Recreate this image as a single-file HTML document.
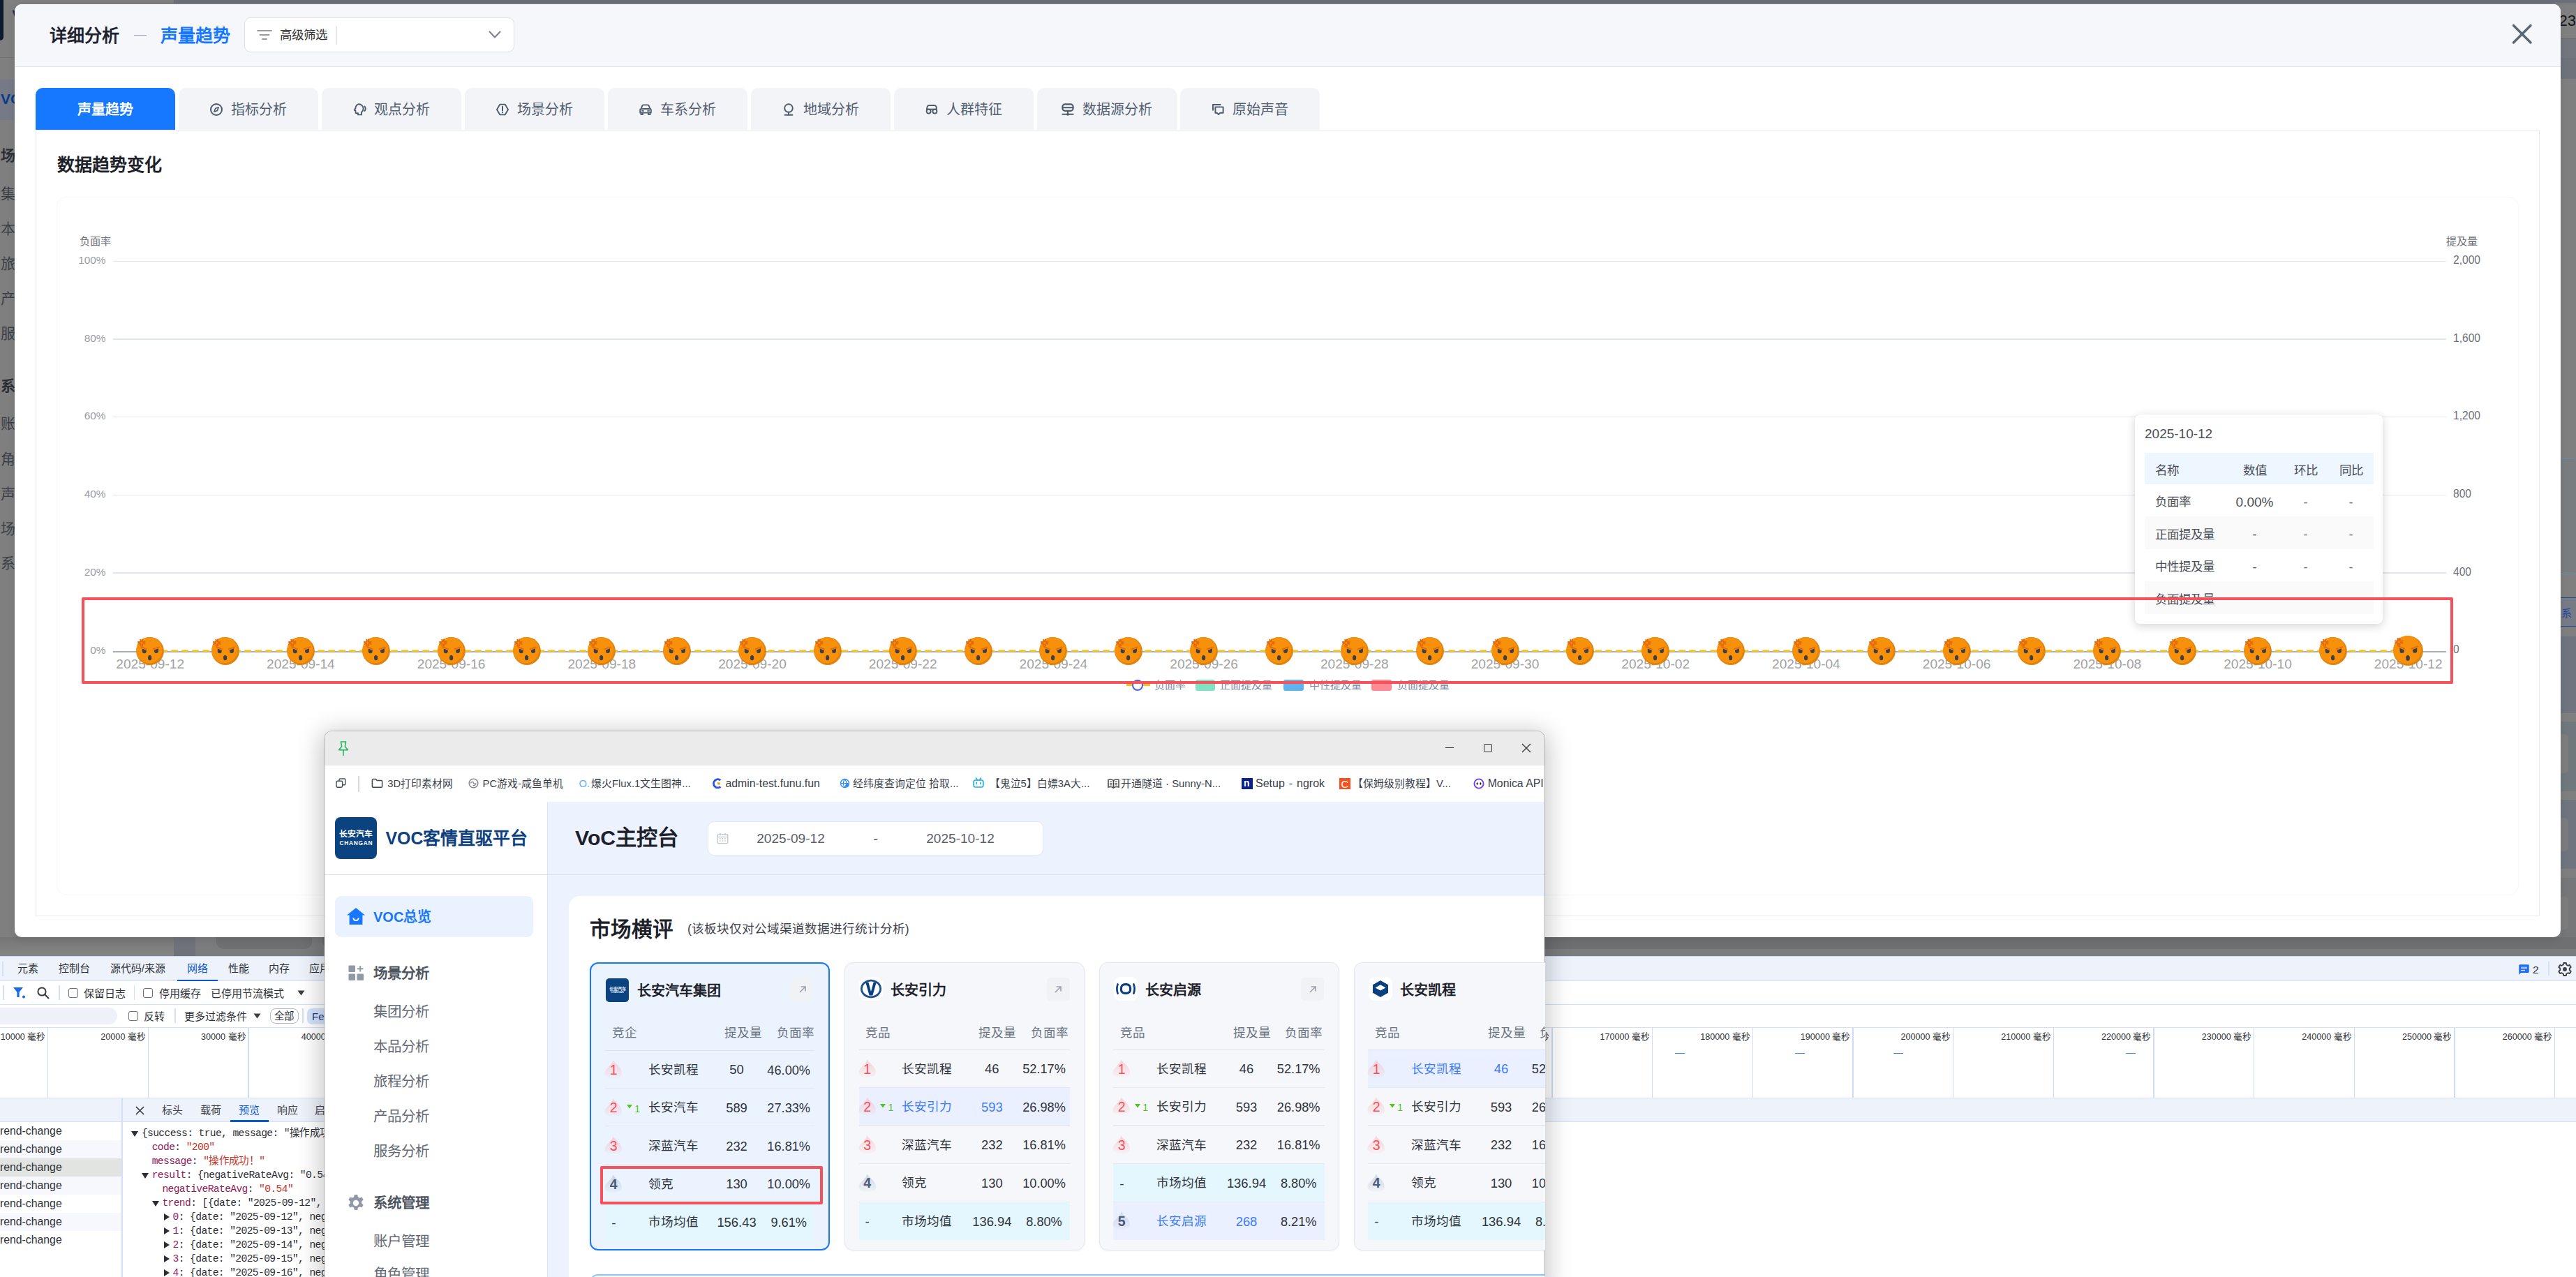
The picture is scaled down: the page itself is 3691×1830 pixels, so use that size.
<!DOCTYPE html>
<html lang="zh-CN"><head><meta charset="utf-8"><title>VOC</title><style>
*{box-sizing:border-box;margin:0;padding:0}
html,body{width:3691px;height:1830px;overflow:hidden}
body{position:relative;background:#7f7f7f;font-family:"Liberation Sans",sans-serif;color:#1d2129}
.a{position:absolute}
.t{position:absolute;white-space:nowrap;line-height:1}
.b{font-weight:bold}
.c{transform:translateX(-50%)}
.r{transform:translateX(-100%)}
.m{font-family:"Liberation Mono",monospace}
</style></head><body>
<!-- dimmed page behind modal -->
<div class="a" style="left:0.0px;top:0.0px;width:3691.0px;height:4.0px;background:#6c6f78;"></div>
<div class="a" style="left:0.0px;top:4.0px;width:3691.0px;height:2.0px;background:#787b83;"></div>
<div class="a" style="left:0.0px;top:0.0px;width:249.0px;height:6.0px;background:#808080;"></div>
<div class="a" style="left:0.0px;top:0.0px;width:5.0px;height:58.0px;background:#0d1a30;border-radius:0 0 5px 0;"></div>
<div class="a" style="left:0.0px;top:114.0px;width:21.0px;height:58.0px;background:#767a86;"></div>
<div class="a" style="left:0.0px;top:82.0px;width:21.0px;height:1.0px;background:#747474;"></div>
<div class="t b" style="left:1.0px;top:130.5px;font-size:21px;color:#0c3a8c;">VO</div>
<div class="t b" style="left:1.0px;top:211.5px;font-size:21px;color:#2b2e35;">场</div>
<div class="t " style="left:1.0px;top:266.5px;font-size:21px;color:#3c3f46;">集</div>
<div class="t " style="left:1.0px;top:316.5px;font-size:21px;color:#3c3f46;">本</div>
<div class="t " style="left:1.0px;top:366.5px;font-size:21px;color:#3c3f46;">旅</div>
<div class="t " style="left:1.0px;top:416.5px;font-size:21px;color:#3c3f46;">产</div>
<div class="t " style="left:1.0px;top:466.5px;font-size:21px;color:#3c3f46;">服</div>
<div class="t b" style="left:1.0px;top:541.5px;font-size:21px;color:#2b2e35;">系</div>
<div class="t " style="left:1.0px;top:595.5px;font-size:21px;color:#3c3f46;">账</div>
<div class="t " style="left:1.0px;top:646.5px;font-size:21px;color:#3c3f46;">角</div>
<div class="t " style="left:1.0px;top:696.5px;font-size:21px;color:#3c3f46;">声</div>
<div class="t " style="left:1.0px;top:746.5px;font-size:21px;color:#3c3f46;">场</div>
<div class="t " style="left:1.0px;top:795.5px;font-size:21px;color:#3c3f46;">系</div>
<div class="t b" style="left:17.5px;top:12.0px;font-size:24px;color:#10244a;">V</div>
<div class="a" style="left:3669.0px;top:6.0px;width:22.0px;height:50.0px;background:#808080;"></div>
<div class="a" style="left:3669.0px;top:56.0px;width:22.0px;height:27.0px;background:#73767f;"></div>
<div class="a" style="left:3669.0px;top:83.0px;width:22.0px;height:30.0px;background:#6e727b;"></div>
<div class="a" style="left:3669.0px;top:55.0px;width:22.0px;height:1.0px;background:#6a6a6a;"></div>
<div class="t " style="left:3666.5px;top:19.0px;font-size:22px;color:#15171c;">232</div>
<div class="a" style="left:0;top:1343px;width:249px;height:27px;background:linear-gradient(#767676,#858585)"></div>
<div class="a" style="left:249.0px;top:1343.0px;width:31.0px;height:27.0px;background:#6f727b;"></div>
<div class="a" style="left:280.0px;top:1343.0px;width:3411.0px;height:27.0px;background:#7b7c7e;"></div>
<div class="a" style="left:310.0px;top:1343.0px;width:137.0px;height:17.0px;background:#6f7072;border-radius:0 0 10px 10px;"></div>
<div class="a" style="left:462.0px;top:1343.0px;width:3229.0px;height:17.0px;background:#6f7072;border-radius:0 0 0 10px;"></div>
<div class="a" style="left:3669.0px;top:657.0px;width:22.0px;height:166.0px;background:#7a7d80;border-top:1.5px solid #6a8aa8;border-bottom:1.5px solid #6f95a8;border-radius:0 4px 4px 0;"></div>
<div class="a" style="left:3669.0px;top:856.0px;width:22.0px;height:42.0px;background:#777b86;border-top:1.5px solid #1f4a9e;border-bottom:1.5px solid #1f4a9e;"></div>
<div class="t " style="left:3670.0px;top:870.5px;font-size:15px;color:#1f4a9e;">系</div>
<div class="a" style="left:3669.0px;top:912.0px;width:22.0px;height:110.0px;background:#70747f;"></div>
<div class="a" style="left:3669.0px;top:1034.0px;width:22.0px;height:100.0px;background:#6f797d;"></div>
<div class="a" style="left:3669.0px;top:1052.0px;width:11.0px;height:56.0px;background:#7e7e7e;border-radius:0 5px 5px 0;"></div>
<div class="a" style="left:3669.0px;top:1146.0px;width:22.0px;height:99.0px;background:#70747f;"></div>
<div class="a" style="left:3669.0px;top:1172.0px;width:11.0px;height:48.0px;background:#7c7c7e;border-radius:0 5px 5px 0;"></div>
<div class="a" style="left:3669.0px;top:1258.0px;width:22.0px;height:85.0px;background:#767778;"></div>
<div class="a" style="left:3669.0px;top:1285.0px;width:11.0px;height:47.0px;background:#7d7d7d;border-radius:0 5px 5px 0;"></div>
<!-- modal -->
<div class="a" style="left:21px;top:6px;width:3648px;height:1337px;background:#fff;border-radius:10px;overflow:hidden;box-shadow:0 3px 12px rgba(0,0,0,.10)">
<div class="a" style="left:0;top:0;width:3648px;height:90px;background:#f5f7fb;border-bottom:1.5px solid #e1e5ed"></div>
</div>
<div class="t b" style="left:71.0px;top:39.3px;font-size:25px;color:#1e2330;">详细分析</div>
<div class="a" style="left:191.5px;top:49.7px;width:18.5px;height:1.5px;background:#9aa2b1;"></div>
<div class="t b" style="left:230.0px;top:39.3px;font-size:25px;color:#1677ff;">声量趋势</div>
<div class="a" style="left:350px;top:25px;width:387px;height:50px;background:#fff;border:1.5px solid #dcdfe6;border-radius:9px"></div>
<svg class="a" style="left:367px;top:40px" width="24" height="20" viewBox="0 0 24 20"><g stroke="#9a9a9a" stroke-width="1.8" stroke-linecap="round"><line x1="2" y1="4" x2="22" y2="4"/><line x1="5.5" y1="10" x2="18.5" y2="10"/><line x1="9" y1="16" x2="15" y2="16"/></g></svg>
<div class="t " style="left:401.0px;top:41.8px;font-size:17.5px;color:#303133;">高级筛选</div>
<div class="a" style="left:481.0px;top:36.5px;width:1.5px;height:27.0px;background:#e4e7ed;"></div>
<svg class="a" style="left:699px;top:43px" width="20" height="14" viewBox="0 0 20 14"><path d="M2.5 2.5 L10 10.5 L17.5 2.5" fill="none" stroke="#7b8190" stroke-width="2" stroke-linecap="round" stroke-linejoin="round"/></svg>
<svg class="a" style="left:3599px;top:34px" width="30" height="30" viewBox="0 0 30 30"><path d="M2.5 2.5 L27 27 M27 2.5 L2.5 27" stroke="#5b6573" stroke-width="3.4" stroke-linecap="round"/></svg>
<div class="a" style="left:51.0px;top:126.0px;width:200.0px;height:60.0px;background:#1677ff;border-radius:10px 10px 0 0;"></div>
<div class="t b c" style="left:151.0px;top:146.5px;font-size:20px;color:#fff;">声量趋势</div>
<div class="a" style="left:256.0px;top:126.0px;width:200.0px;height:60.0px;background:#f2f4f8;border-radius:10px 10px 0 0;"></div>
<svg class="a" style="left:300.2px;top:146.5px" width="20" height="20" viewBox="0 0 20 20"><circle cx="10" cy="10" r="8" fill="none" stroke="#4e5969" stroke-width="2"/><path d="M13.2 6.8 L11.4 11.4 L6.8 13.2 L8.6 8.6 Z" fill="none" stroke="#4e5969" stroke-width="1.6" stroke-linejoin="round"/></svg>
<div class="t " style="left:330.5px;top:146.5px;font-size:20px;color:#535e70;">指标分析</div>
<div class="a" style="left:461.0px;top:126.0px;width:200.0px;height:60.0px;background:#f2f4f8;border-radius:10px 10px 0 0;"></div>
<svg class="a" style="left:505.2px;top:146.5px" width="20" height="20" viewBox="0 0 20 20"><path d="M9 2.2 a6.6 6.6 0 0 1 6.6 6.6 c0 2.4 -1.2 4 -2.6 5.2 v3.4 h-5 v-2.2 h-2 c-1 0 -1.6 -0.6 -1.6 -1.6 v-2 l-1.6 -1 l1.6 -2.6 a6.6 6.6 0 0 1 4.6 -5.8 Z" fill="none" stroke="#4e5969" stroke-width="1.9" stroke-linejoin="round"/><path d="M17.6 5.6 a5.5 5.5 0 0 1 0 6.4" fill="none" stroke="#4e5969" stroke-width="1.9" stroke-linecap="round"/></svg>
<div class="t " style="left:535.5px;top:146.5px;font-size:20px;color:#535e70;">观点分析</div>
<div class="a" style="left:666.0px;top:126.0px;width:200.0px;height:60.0px;background:#f2f4f8;border-radius:10px 10px 0 0;"></div>
<svg class="a" style="left:710.2px;top:146.5px" width="20" height="20" viewBox="0 0 20 20"><path d="M6.2 2.6 h7.6 l4.2 7.4 l-4.2 7.4 h-7.6 l-4.2 -7.4 Z" fill="none" stroke="#4e5969" stroke-width="1.9" stroke-linejoin="round"/><path d="M10 5.8 v5.4" stroke="#4e5969" stroke-width="2" stroke-linecap="round"/><circle cx="10" cy="14" r="1.15" fill="#4e5969"/></svg>
<div class="t " style="left:740.5px;top:146.5px;font-size:20px;color:#535e70;">场景分析</div>
<div class="a" style="left:871.0px;top:126.0px;width:200.0px;height:60.0px;background:#f2f4f8;border-radius:10px 10px 0 0;"></div>
<svg class="a" style="left:915.2px;top:146.5px" width="20" height="20" viewBox="0 0 20 20"><path d="M3.600 9 L5.200 4.600 c.3 -.8 .9 -1.200 1.700 -1.200 h6.200 c.8 0 1.400 .4 1.700 1.200 l1.600 4.400" fill="none" stroke="#4e5969" stroke-width="1.900" stroke-linejoin="round"/><path d="M2.200 10.600 a1.600 1.600 0 0 1 1.600 -1.600 h12.400 a1.600 1.600 0 0 1 1.600 1.600 v4 h-15.600 Z" fill="none" stroke="#4e5969" stroke-width="1.900" stroke-linejoin="round"/><path d="M3.400 14.600 v2.600 h2.600 v-2.600 M14 14.600 v2.600 h2.600 v-2.600" fill="none" stroke="#4e5969" stroke-width="1.700" stroke-linejoin="round"/><path d="M5 11.900 h2 M13 11.900 h2" stroke="#4e5969" stroke-width="1.700" stroke-linecap="round"/></svg>
<div class="t " style="left:945.5px;top:146.5px;font-size:20px;color:#535e70;">车系分析</div>
<div class="a" style="left:1076.0px;top:126.0px;width:200.0px;height:60.0px;background:#f2f4f8;border-radius:10px 10px 0 0;"></div>
<svg class="a" style="left:1120.2px;top:146.5px" width="20" height="20" viewBox="0 0 20 20"><circle cx="10" cy="8" r="5.8" fill="none" stroke="#4e5969" stroke-width="1.9"/><path d="M10 13.8 v3.6 M4.6 17.8 h10.8" stroke="#4e5969" stroke-width="1.9" stroke-linecap="round"/></svg>
<div class="t " style="left:1150.5px;top:146.5px;font-size:20px;color:#535e70;">地域分析</div>
<div class="a" style="left:1281.0px;top:126.0px;width:200.0px;height:60.0px;background:#f2f4f8;border-radius:10px 10px 0 0;"></div>
<svg class="a" style="left:1325.2px;top:146.5px" width="20" height="20" viewBox="0 0 20 20"><path d="M3 10 c0 -4 1.4 -6 3.2 -6 h7.6 c1.8 0 3.2 2 3.2 6" fill="none" stroke="#4e5969" stroke-width="1.9"/><circle cx="5.6" cy="12.6" r="3" fill="none" stroke="#4e5969" stroke-width="1.9"/><circle cx="14.4" cy="12.6" r="3" fill="none" stroke="#4e5969" stroke-width="1.9"/><path d="M2 9.6 h16" stroke="#4e5969" stroke-width="1.9"/></svg>
<div class="t " style="left:1355.5px;top:146.5px;font-size:20px;color:#535e70;">人群特征</div>
<div class="a" style="left:1486.0px;top:126.0px;width:200.0px;height:60.0px;background:#f2f4f8;border-radius:10px 10px 0 0;"></div>
<svg class="a" style="left:1520.2px;top:146.5px" width="20" height="20" viewBox="0 0 20 20"><rect x="2.4" y="2.4" width="15.2" height="9.4" rx="3.6" fill="none" stroke="#4e5969" stroke-width="2.2"/><path d="M2.4 7.2 h15.2" stroke="#4e5969" stroke-width="2"/><path d="M10 11.8 v4 M2.4 16.8 h15.2" stroke="#4e5969" stroke-width="2" stroke-linecap="round"/><circle cx="10" cy="16.8" r="1.9" fill="#4e5969"/></svg>
<div class="t " style="left:1550.5px;top:146.5px;font-size:20px;color:#535e70;">数据源分析</div>
<div class="a" style="left:1691.0px;top:126.0px;width:200.0px;height:60.0px;background:#f2f4f8;border-radius:10px 10px 0 0;"></div>
<svg class="a" style="left:1735.2px;top:146.5px" width="20" height="20" viewBox="0 0 20 20"><path d="M6.4 6.4 h11.2 v8.4 h-4.4 l-2.2 2.2 l-2.2 -2.2 h-2.4 Z" fill="none" stroke="#4e5969" stroke-width="1.9" stroke-linejoin="round"/><path d="M3 11.6 v-8.6 h11.4" fill="none" stroke="#4e5969" stroke-width="1.9" stroke-linejoin="round"/></svg>
<div class="t " style="left:1765.5px;top:146.5px;font-size:20px;color:#535e70;">原始声音</div>
<div class="a" style="left:51px;top:186px;width:3588px;height:1127px;border:1.5px solid #e8ebf2;"></div>
<div class="t b" style="left:82.0px;top:223.5px;font-size:25px;color:#1d2129;">数据趋势变化</div>
<div class="a" style="left:81px;top:282px;width:3528px;height:1001px;border:1.5px solid #f6f7fa;border-radius:14px"></div>
<div class="t " style="left:114.0px;top:338.4px;font-size:15.2px;color:#6e7079;">负面率</div>
<div class="t " style="left:3504.5px;top:338.4px;font-size:15.2px;color:#6e7079;">提及量</div>
<div class="a" style="left:162.0px;top:373.5px;width:3343.0px;height:1.8px;background:#e0e6f1;"></div>
<div class="t r" style="left:151.5px;top:365.2px;font-size:15.4px;color:#999ca3;">100%</div>
<div class="t " style="left:3515.0px;top:365.1px;font-size:15.6px;color:#6e7079;">2,000</div>
<div class="a" style="left:162.0px;top:485.0px;width:3343.0px;height:1.8px;background:#e0e6f1;"></div>
<div class="t r" style="left:151.5px;top:476.7px;font-size:15.4px;color:#999ca3;">80%</div>
<div class="t " style="left:3515.0px;top:476.6px;font-size:15.6px;color:#6e7079;">1,600</div>
<div class="a" style="left:162.0px;top:596.7px;width:3343.0px;height:1.8px;background:#e0e6f1;"></div>
<div class="t r" style="left:151.5px;top:588.4px;font-size:15.4px;color:#999ca3;">60%</div>
<div class="t " style="left:3515.0px;top:588.3px;font-size:15.6px;color:#6e7079;">1,200</div>
<div class="a" style="left:162.0px;top:708.5px;width:3343.0px;height:1.8px;background:#e0e6f1;"></div>
<div class="t r" style="left:151.5px;top:700.2px;font-size:15.4px;color:#999ca3;">40%</div>
<div class="t " style="left:3515.0px;top:700.1px;font-size:15.6px;color:#6e7079;">800</div>
<div class="a" style="left:162.0px;top:820.1px;width:3343.0px;height:1.8px;background:#e0e6f1;"></div>
<div class="t r" style="left:151.5px;top:811.8px;font-size:15.4px;color:#999ca3;">20%</div>
<div class="t " style="left:3515.0px;top:811.7px;font-size:15.6px;color:#6e7079;">400</div>
<div class="t r" style="left:151.5px;top:923.5px;font-size:15.4px;color:#999ca3;">0%</div>
<div class="t " style="left:3515.0px;top:923.4px;font-size:15.6px;color:#6e7079;">0</div>
<div class="a" style="left:162.0px;top:933.0px;width:3343.0px;height:1.6px;background:#a9aebb;"></div>
<div class="t c" style="left:215.2px;top:941.5px;font-size:19.1px;color:#a2a2a2;">2025-09-12</div>
<div class="t c" style="left:430.9px;top:941.5px;font-size:19.1px;color:#a2a2a2;">2025-09-14</div>
<div class="t c" style="left:646.6px;top:941.5px;font-size:19.1px;color:#a2a2a2;">2025-09-16</div>
<div class="t c" style="left:862.3px;top:941.5px;font-size:19.1px;color:#a2a2a2;">2025-09-18</div>
<div class="t c" style="left:1078.0px;top:941.5px;font-size:19.1px;color:#a2a2a2;">2025-09-20</div>
<div class="t c" style="left:1293.7px;top:941.5px;font-size:19.1px;color:#a2a2a2;">2025-09-22</div>
<div class="t c" style="left:1509.4px;top:941.5px;font-size:19.1px;color:#a2a2a2;">2025-09-24</div>
<div class="t c" style="left:1725.1px;top:941.5px;font-size:19.1px;color:#a2a2a2;">2025-09-26</div>
<div class="t c" style="left:1940.8px;top:941.5px;font-size:19.1px;color:#a2a2a2;">2025-09-28</div>
<div class="t c" style="left:2156.5px;top:941.5px;font-size:19.1px;color:#a2a2a2;">2025-09-30</div>
<div class="t c" style="left:2372.2px;top:941.5px;font-size:19.1px;color:#a2a2a2;">2025-10-02</div>
<div class="t c" style="left:2587.9px;top:941.5px;font-size:19.1px;color:#a2a2a2;">2025-10-04</div>
<div class="t c" style="left:2803.6px;top:941.5px;font-size:19.1px;color:#a2a2a2;">2025-10-06</div>
<div class="t c" style="left:3019.3px;top:941.5px;font-size:19.1px;color:#a2a2a2;">2025-10-08</div>
<div class="t c" style="left:3235.0px;top:941.5px;font-size:19.1px;color:#a2a2a2;">2025-10-10</div>
<div class="t c" style="left:3450.7px;top:941.5px;font-size:19.1px;color:#a2a2a2;">2025-10-12</div>
<svg class="a" style="left:0;top:926px" width="3691" height="14"><line x1="215.2" y1="6.8" x2="3450.7" y2="6.8" stroke="#fcc10a" stroke-width="2.4" stroke-dasharray="9.8 5.2"/></svg>
<svg width="0" height="0" style="position:absolute"><defs><g id="ang">
<circle cx="20" cy="20" r="19.9" fill="#e0820e"/>
<circle cx="18.800" cy="18.700" r="18.600" fill="#f7900a"/>
<path d="M6.300 3.700 L6.800 6.300 M8.900 3.500 L8.800 6.100 M6.700 10.300 L6.400 12.700 M8.800 10.500 L9 12.900 M2.900 7 L5.500 7.300 M3.100 9.600 L5.500 9.400 M10 7.300 L12.600 7 M10 9.400 L12.500 9.600" stroke="#e4680b" stroke-width="1.900" stroke-linecap="round" fill="none"/>
<path d="M7.200 14.100 L14.800 17.200" stroke="#e66d0b" stroke-width="1.900" stroke-linecap="round"/>
<path d="M32.800 14.300 L24.600 17.200" stroke="#e66d0b" stroke-width="1.900" stroke-linecap="round"/>
<path d="M8.800 16.500 L14.700 18.900 V20.300 a2.950 2.950 0 0 1 -5.900 0 Z" fill="#3e3f45"/>
<path d="M31.900 16.300 L26 18.700 V20.100 a2.950 2.950 0 0 0 5.900 0 Z" fill="#3e3f45"/>
<ellipse cx="19.600" cy="29.700" rx="2.600" ry="3.600" fill="#3e3f45"/>
</g></defs></svg>
<svg class="a" style="left:195.2px;top:912.9px" width="40" height="40" viewBox="0 0 40 40"><use href="#ang"/></svg>
<svg class="a" style="left:303.0px;top:912.9px" width="40" height="40" viewBox="0 0 40 40"><use href="#ang"/></svg>
<svg class="a" style="left:410.9px;top:912.9px" width="40" height="40" viewBox="0 0 40 40"><use href="#ang"/></svg>
<svg class="a" style="left:518.8px;top:912.9px" width="40" height="40" viewBox="0 0 40 40"><use href="#ang"/></svg>
<svg class="a" style="left:626.6px;top:912.9px" width="40" height="40" viewBox="0 0 40 40"><use href="#ang"/></svg>
<svg class="a" style="left:734.5px;top:912.9px" width="40" height="40" viewBox="0 0 40 40"><use href="#ang"/></svg>
<svg class="a" style="left:842.3px;top:912.9px" width="40" height="40" viewBox="0 0 40 40"><use href="#ang"/></svg>
<svg class="a" style="left:950.1px;top:912.9px" width="40" height="40" viewBox="0 0 40 40"><use href="#ang"/></svg>
<svg class="a" style="left:1058.0px;top:912.9px" width="40" height="40" viewBox="0 0 40 40"><use href="#ang"/></svg>
<svg class="a" style="left:1165.8px;top:912.9px" width="40" height="40" viewBox="0 0 40 40"><use href="#ang"/></svg>
<svg class="a" style="left:1273.7px;top:912.9px" width="40" height="40" viewBox="0 0 40 40"><use href="#ang"/></svg>
<svg class="a" style="left:1381.5px;top:912.9px" width="40" height="40" viewBox="0 0 40 40"><use href="#ang"/></svg>
<svg class="a" style="left:1489.4px;top:912.9px" width="40" height="40" viewBox="0 0 40 40"><use href="#ang"/></svg>
<svg class="a" style="left:1597.2px;top:912.9px" width="40" height="40" viewBox="0 0 40 40"><use href="#ang"/></svg>
<svg class="a" style="left:1705.1px;top:912.9px" width="40" height="40" viewBox="0 0 40 40"><use href="#ang"/></svg>
<svg class="a" style="left:1813.0px;top:912.9px" width="40" height="40" viewBox="0 0 40 40"><use href="#ang"/></svg>
<svg class="a" style="left:1920.8px;top:912.9px" width="40" height="40" viewBox="0 0 40 40"><use href="#ang"/></svg>
<svg class="a" style="left:2028.6px;top:912.9px" width="40" height="40" viewBox="0 0 40 40"><use href="#ang"/></svg>
<svg class="a" style="left:2136.5px;top:912.9px" width="40" height="40" viewBox="0 0 40 40"><use href="#ang"/></svg>
<svg class="a" style="left:2244.3px;top:912.9px" width="40" height="40" viewBox="0 0 40 40"><use href="#ang"/></svg>
<svg class="a" style="left:2352.2px;top:912.9px" width="40" height="40" viewBox="0 0 40 40"><use href="#ang"/></svg>
<svg class="a" style="left:2460.0px;top:912.9px" width="40" height="40" viewBox="0 0 40 40"><use href="#ang"/></svg>
<svg class="a" style="left:2567.9px;top:912.9px" width="40" height="40" viewBox="0 0 40 40"><use href="#ang"/></svg>
<svg class="a" style="left:2675.7px;top:912.9px" width="40" height="40" viewBox="0 0 40 40"><use href="#ang"/></svg>
<svg class="a" style="left:2783.6px;top:912.9px" width="40" height="40" viewBox="0 0 40 40"><use href="#ang"/></svg>
<svg class="a" style="left:2891.4px;top:912.9px" width="40" height="40" viewBox="0 0 40 40"><use href="#ang"/></svg>
<svg class="a" style="left:2999.3px;top:912.9px" width="40" height="40" viewBox="0 0 40 40"><use href="#ang"/></svg>
<svg class="a" style="left:3107.1px;top:912.9px" width="40" height="40" viewBox="0 0 40 40"><use href="#ang"/></svg>
<svg class="a" style="left:3215.0px;top:912.9px" width="40" height="40" viewBox="0 0 40 40"><use href="#ang"/></svg>
<svg class="a" style="left:3322.8px;top:912.9px" width="40" height="40" viewBox="0 0 40 40"><use href="#ang"/></svg>
<svg class="a" style="left:3429.2px;top:911.4px" width="43" height="43" viewBox="0 0 40 40"><use href="#ang"/></svg>
<div class="a" style="left:1614.0px;top:980.3px;width:34.0px;height:2.6px;background:#f7bb1c;"></div>
<div class="a" style="left:1622.4px;top:973.6px;width:16px;height:16px;border-radius:50%;border:2.6px solid #4a63d9;background:#fff"></div>
<div class="t " style="left:1653.5px;top:974.1px;font-size:15px;color:#7c89a3;">负面率</div>
<div class="a" style="left:1712.7px;top:974.0px;width:28.5px;height:15.5px;background:#7fe3c4;border-radius:3px;"></div>
<div class="t " style="left:1748.4px;top:974.1px;font-size:15px;color:#7c89a3;">正面提及量</div>
<div class="a" style="left:1839.0px;top:974.0px;width:28.5px;height:15.5px;background:#5fb4ef;border-radius:3px;"></div>
<div class="t " style="left:1876.4px;top:974.1px;font-size:15px;color:#7c89a3;">中性提及量</div>
<div class="a" style="left:1965.0px;top:974.0px;width:28.5px;height:15.5px;background:#fe8a93;border-radius:3px;"></div>
<div class="t " style="left:2002.0px;top:974.1px;font-size:15px;color:#7c89a3;">负面提及量</div>
<div class="a" style="left:3059px;top:594px;width:355px;height:300px;background:#fff;border-radius:8px;box-shadow:0 3px 14px rgba(0,0,0,.18);overflow:hidden">
<div class="a" style="left:14.0px;top:54.5px;width:328.0px;height:45.5px;background:#eef6ff;"></div>
<div class="a" style="left:14.0px;top:146.0px;width:328.0px;height:46.5px;background:#fafafa;"></div>
<div class="a" style="left:14.0px;top:239.0px;width:328.0px;height:46.5px;background:#fafafa;"></div>
</div>
<div class="t " style="left:3073.0px;top:612.0px;font-size:19px;color:#4b4f57;">2025-10-12</div>
<div class="t " style="left:3087.5px;top:665.5px;font-size:17.5px;color:#4b4f57;">名称</div>
<div class="t c" style="left:3230.5px;top:665.5px;font-size:17.5px;color:#4b4f57;">数值</div>
<div class="t c" style="left:3303.5px;top:665.5px;font-size:17.5px;color:#4b4f57;">环比</div>
<div class="t c" style="left:3368.5px;top:665.5px;font-size:17.5px;color:#4b4f57;">同比</div>
<div class="t " style="left:3087.5px;top:711.1px;font-size:17.5px;color:#4b4f57;">负面率</div>
<div class="t c" style="left:3230.5px;top:710.4px;font-size:19px;color:#4b4f57;">0.00%</div>
<div class="t c" style="left:3303.5px;top:710.9px;font-size:18px;color:#6b6f78;">-</div>
<div class="t c" style="left:3368.5px;top:710.9px;font-size:18px;color:#6b6f78;">-</div>
<div class="t " style="left:3087.5px;top:757.6px;font-size:17.5px;color:#4b4f57;">正面提及量</div>
<div class="t c" style="left:3230.5px;top:757.4px;font-size:18px;color:#4b4f57;">-</div>
<div class="t c" style="left:3303.5px;top:757.4px;font-size:18px;color:#6b6f78;">-</div>
<div class="t c" style="left:3368.5px;top:757.4px;font-size:18px;color:#6b6f78;">-</div>
<div class="t " style="left:3087.5px;top:804.1px;font-size:17.5px;color:#4b4f57;">中性提及量</div>
<div class="t c" style="left:3230.5px;top:803.9px;font-size:18px;color:#4b4f57;">-</div>
<div class="t c" style="left:3303.5px;top:803.9px;font-size:18px;color:#6b6f78;">-</div>
<div class="t c" style="left:3368.5px;top:803.9px;font-size:18px;color:#6b6f78;">-</div>
<div class="t " style="left:3087.5px;top:850.6px;font-size:17.5px;color:#4b4f57;">负面提及量</div>
<div class="a" style="left:117px;top:855.5px;width:3398px;height:124px;border:4.4px solid #f6525c;border-radius:2px"></div>
<!-- devtools -->
<div class="a" style="left:0.0px;top:1370.0px;width:3691.0px;height:460.0px;background:#fff;"></div>
<div class="a" style="left:0.0px;top:1370.0px;width:3691.0px;height:35.5px;background:#edf2fb;border-top:1.5px solid #c9d8f4;border-bottom:1.5px solid #d3e0f7;"></div>
<div class="a" style="left:3.0px;top:1378.0px;width:1.5px;height:21.0px;background:#d3e0f7;"></div>
<div class="t " style="left:24.8px;top:1379.5px;font-size:15px;color:#2e3238;">元素</div>
<div class="t " style="left:84.0px;top:1379.5px;font-size:15px;color:#2e3238;">控制台</div>
<div class="t " style="left:157.7px;top:1379.5px;font-size:15px;color:#2e3238;">源代码/来源</div>
<div class="t " style="left:326.7px;top:1379.5px;font-size:15px;color:#2e3238;">性能</div>
<div class="t " style="left:385.4px;top:1379.5px;font-size:15px;color:#2e3238;">内存</div>
<div class="t " style="left:443.0px;top:1379.5px;font-size:15px;color:#2e3238;">应用</div>
<div class="t " style="left:267.6px;top:1379.5px;font-size:15px;color:#0b57d0;">网络</div>
<div class="a" style="left:253.6px;top:1403.5px;width:58.7px;height:2.5px;background:#0b57d0;"></div>
<svg class="a" style="left:3609px;top:1382px" width="15" height="15" viewBox="0 0 15 15"><path d="M0.300 1.600 a1.300 1.300 0 0 1 1.300 -1.300 h11.800 a1.300 1.300 0 0 1 1.300 1.300 v9 a1.300 1.300 0 0 1 -1.300 1.300 h-10.300 l-2.800 2.800 Z" fill="#1a6cf0"/><path d="M3 4.200 h9 M3 6 h9" stroke="#9cc0fa" stroke-width="1.500"/><path d="M3 8.600 h6" stroke="#dbe8fd" stroke-width="1.300"/></svg>
<div class="t " style="left:3629.0px;top:1382.0px;font-size:15.5px;color:#2e3238;">2</div>
<div class="a" style="left:3651.3px;top:1378.0px;width:1.5px;height:20.0px;background:#d3e0f7;"></div>
<svg class="a" style="left:3665.4px;top:1378.6px" width="20" height="20" viewBox="0 0 20 20"><path d="M7.76 3.47 L8.17 0.98 L11.83 0.98 L12.24 3.47 L14.54 4.80 L16.89 3.91 L18.72 7.07 L16.77 8.67 L16.77 11.33 L18.72 12.93 L16.89 16.09 L14.54 15.20 L12.24 16.53 L11.83 19.02 L8.17 19.02 L7.76 16.53 L5.46 15.20 L3.11 16.09 L1.28 12.93 L3.23 11.33 L3.23 8.67 L1.28 7.07 L3.11 3.91 L5.46 4.80 Z" fill="none" stroke="#3c4043" stroke-width="1.9" stroke-linejoin="round"/><circle cx="10" cy="10" r="2.9" fill="#3c4043"/></svg>
<div class="a" style="left:0.0px;top:1438.5px;width:3691.0px;height:1.5px;background:#d3e0f7;"></div>
<div class="a" style="left:4.0px;top:1412.0px;width:1.5px;height:21.0px;background:#d3e0f7;"></div>
<svg class="a" style="left:18px;top:1414px" width="20" height="18" viewBox="0 0 20 18"><path d="M1 1 h14 l-5.4 6.8 v7.2 h-3.2 v-7.2 Z" fill="#1a6be0"/><circle cx="16" cy="14.6" r="2" fill="#1a6be0"/></svg>
<svg class="a" style="left:52px;top:1413px" width="20" height="20" viewBox="0 0 20 20"><circle cx="8" cy="8" r="5.6" fill="none" stroke="#3a3d42" stroke-width="2"/><path d="M12.2 12.2 L18 18" stroke="#3a3d42" stroke-width="2.2"/></svg>
<div class="a" style="left:84.0px;top:1412.0px;width:1.5px;height:21.0px;background:#d3e0f7;"></div>
<div class="a" style="left:98.0px;top:1415.5px;width:14px;height:14px;border:1.5px solid #6b6f76;border-radius:3px;background:#fff"></div>
<div class="t " style="left:120.0px;top:1415.5px;font-size:15px;color:#2e3238;">保留日志</div>
<div class="a" style="left:191.5px;top:1412.0px;width:1.5px;height:21.0px;background:#d3e0f7;"></div>
<div class="a" style="left:205.0px;top:1415.5px;width:14px;height:14px;border:1.5px solid #6b6f76;border-radius:3px;background:#fff"></div>
<div class="t " style="left:227.6px;top:1415.5px;font-size:15px;color:#2e3238;">停用缓存</div>
<div class="t " style="left:301.5px;top:1415.5px;font-size:15px;color:#2e3238;">已停用节流模式</div>
<svg class="a" style="left:426px;top:1419px" width="11" height="8" viewBox="0 0 11 8"><path d="M0.5 0.5 h10 l-5 7 Z" fill="#3a3d42"/></svg>
<div class="a" style="left:0.0px;top:1471.5px;width:3691.0px;height:1.5px;background:#d3e0f7;"></div>
<div class="a" style="left:-20.0px;top:1443.5px;width:188.0px;height:24.5px;background:#eef1f8;border-radius:13px;"></div>
<div class="a" style="left:184.0px;top:1449.0px;width:14px;height:14px;border:1.5px solid #6b6f76;border-radius:3px;background:#fff"></div>
<div class="t " style="left:205.7px;top:1448.5px;font-size:15px;color:#2e3238;">反转</div>
<div class="a" style="left:250.0px;top:1445.0px;width:1.5px;height:21.0px;background:#d3e0f7;"></div>
<div class="t " style="left:263.6px;top:1448.5px;font-size:15px;color:#2e3238;">更多过滤条件</div>
<svg class="a" style="left:362.5px;top:1452px" width="11" height="8" viewBox="0 0 11 8"><path d="M0.5 0.5 h10 l-5 7 Z" fill="#3a3d42"/></svg>
<div class="a" style="left:386.5px;top:1445px;width:41px;height:22px;border:1.3px solid #b4b9c3;border-radius:8px"></div>
<div class="t " style="left:393.0px;top:1448.8px;font-size:14.5px;color:#2e3238;">全部</div>
<div class="a" style="left:433.0px;top:1445.0px;width:1.5px;height:21.0px;background:#d3e0f7;"></div>
<div class="a" style="left:439.5px;top:1444.5px;width:60.0px;height:23.0px;background:#d3e3fd;border-radius:7px;"></div>
<div class="t " style="left:447.0px;top:1448.5px;font-size:15px;color:#1f3a6e;">Fetch</div>
<div class="a" style="left:68.0px;top:1472.5px;width:1.4px;height:101.0px;background:#cfdcf5;"></div>
<div class="t r" style="left:65.2px;top:1480.0px;font-size:12.6px;color:#2e3238;">10000 毫秒</div>
<div class="a" style="left:211.7px;top:1472.5px;width:1.4px;height:101.0px;background:#cfdcf5;"></div>
<div class="t r" style="left:208.9px;top:1480.0px;font-size:12.6px;color:#2e3238;">20000 毫秒</div>
<div class="a" style="left:355.4px;top:1472.5px;width:1.4px;height:101.0px;background:#cfdcf5;"></div>
<div class="t r" style="left:352.6px;top:1480.0px;font-size:12.6px;color:#2e3238;">30000 毫秒</div>
<div class="a" style="left:499.0px;top:1472.5px;width:1.4px;height:101.0px;background:#cfdcf5;"></div>
<div class="t r" style="left:496.2px;top:1480.0px;font-size:12.6px;color:#2e3238;">40000 毫秒</div>
<div class="a" style="left:642.7px;top:1472.5px;width:1.4px;height:101.0px;background:#cfdcf5;"></div>
<div class="t r" style="left:639.9px;top:1480.0px;font-size:12.6px;color:#2e3238;">50000 毫秒</div>
<div class="a" style="left:786.4px;top:1472.5px;width:1.4px;height:101.0px;background:#cfdcf5;"></div>
<div class="t r" style="left:783.6px;top:1480.0px;font-size:12.6px;color:#2e3238;">60000 毫秒</div>
<div class="a" style="left:930.1px;top:1472.5px;width:1.4px;height:101.0px;background:#cfdcf5;"></div>
<div class="t r" style="left:927.3px;top:1480.0px;font-size:12.6px;color:#2e3238;">70000 毫秒</div>
<div class="a" style="left:1073.8px;top:1472.5px;width:1.4px;height:101.0px;background:#cfdcf5;"></div>
<div class="t r" style="left:1071.0px;top:1480.0px;font-size:12.6px;color:#2e3238;">80000 毫秒</div>
<div class="a" style="left:1217.4px;top:1472.5px;width:1.4px;height:101.0px;background:#cfdcf5;"></div>
<div class="t r" style="left:1214.6px;top:1480.0px;font-size:12.6px;color:#2e3238;">90000 毫秒</div>
<div class="a" style="left:1361.1px;top:1472.5px;width:1.4px;height:101.0px;background:#cfdcf5;"></div>
<div class="t r" style="left:1358.3px;top:1480.0px;font-size:12.6px;color:#2e3238;">100000 毫秒</div>
<div class="a" style="left:1504.8px;top:1472.5px;width:1.4px;height:101.0px;background:#cfdcf5;"></div>
<div class="t r" style="left:1502.0px;top:1480.0px;font-size:12.6px;color:#2e3238;">110000 毫秒</div>
<div class="a" style="left:1648.5px;top:1472.5px;width:1.4px;height:101.0px;background:#cfdcf5;"></div>
<div class="t r" style="left:1645.7px;top:1480.0px;font-size:12.6px;color:#2e3238;">120000 毫秒</div>
<div class="a" style="left:1792.2px;top:1472.5px;width:1.4px;height:101.0px;background:#cfdcf5;"></div>
<div class="t r" style="left:1789.4px;top:1480.0px;font-size:12.6px;color:#2e3238;">130000 毫秒</div>
<div class="a" style="left:1935.8px;top:1472.5px;width:1.4px;height:101.0px;background:#cfdcf5;"></div>
<div class="t r" style="left:1933.0px;top:1480.0px;font-size:12.6px;color:#2e3238;">140000 毫秒</div>
<div class="a" style="left:2079.5px;top:1472.5px;width:1.4px;height:101.0px;background:#cfdcf5;"></div>
<div class="t r" style="left:2076.7px;top:1480.0px;font-size:12.6px;color:#2e3238;">150000 毫秒</div>
<div class="a" style="left:2223.2px;top:1472.5px;width:1.4px;height:101.0px;background:#cfdcf5;"></div>
<div class="t r" style="left:2220.4px;top:1480.0px;font-size:12.6px;color:#2e3238;">160000 毫秒</div>
<div class="a" style="left:2366.9px;top:1472.5px;width:1.4px;height:101.0px;background:#cfdcf5;"></div>
<div class="t r" style="left:2364.1px;top:1480.0px;font-size:12.6px;color:#2e3238;">170000 毫秒</div>
<div class="a" style="left:2510.6px;top:1472.5px;width:1.4px;height:101.0px;background:#cfdcf5;"></div>
<div class="t r" style="left:2507.8px;top:1480.0px;font-size:12.6px;color:#2e3238;">180000 毫秒</div>
<div class="a" style="left:2654.2px;top:1472.5px;width:1.4px;height:101.0px;background:#cfdcf5;"></div>
<div class="t r" style="left:2651.4px;top:1480.0px;font-size:12.6px;color:#2e3238;">190000 毫秒</div>
<div class="a" style="left:2797.9px;top:1472.5px;width:1.4px;height:101.0px;background:#cfdcf5;"></div>
<div class="t r" style="left:2795.1px;top:1480.0px;font-size:12.6px;color:#2e3238;">200000 毫秒</div>
<div class="a" style="left:2941.6px;top:1472.5px;width:1.4px;height:101.0px;background:#cfdcf5;"></div>
<div class="t r" style="left:2938.8px;top:1480.0px;font-size:12.6px;color:#2e3238;">210000 毫秒</div>
<div class="a" style="left:3085.3px;top:1472.5px;width:1.4px;height:101.0px;background:#cfdcf5;"></div>
<div class="t r" style="left:3082.5px;top:1480.0px;font-size:12.6px;color:#2e3238;">220000 毫秒</div>
<div class="a" style="left:3229.0px;top:1472.5px;width:1.4px;height:101.0px;background:#cfdcf5;"></div>
<div class="t r" style="left:3226.2px;top:1480.0px;font-size:12.6px;color:#2e3238;">230000 毫秒</div>
<div class="a" style="left:3372.6px;top:1472.5px;width:1.4px;height:101.0px;background:#cfdcf5;"></div>
<div class="t r" style="left:3369.8px;top:1480.0px;font-size:12.6px;color:#2e3238;">240000 毫秒</div>
<div class="a" style="left:3516.3px;top:1472.5px;width:1.4px;height:101.0px;background:#cfdcf5;"></div>
<div class="t r" style="left:3513.5px;top:1480.0px;font-size:12.6px;color:#2e3238;">250000 毫秒</div>
<div class="a" style="left:3660.0px;top:1472.5px;width:1.4px;height:101.0px;background:#cfdcf5;"></div>
<div class="t r" style="left:3657.2px;top:1480.0px;font-size:12.6px;color:#2e3238;">260000 毫秒</div>
<div class="a" style="left:2400.0px;top:1508.7px;width:2.0px;height:1.8px;background:#35b36a;"></div>
<div class="a" style="left:2402.0px;top:1508.7px;width:11.5px;height:1.8px;background:#3b82f0;"></div>
<div class="a" style="left:2572.0px;top:1508.7px;width:2.0px;height:1.8px;background:#35b36a;"></div>
<div class="a" style="left:2574.0px;top:1508.7px;width:11.5px;height:1.8px;background:#3b82f0;"></div>
<div class="a" style="left:2713.0px;top:1508.7px;width:2.0px;height:1.8px;background:#35b36a;"></div>
<div class="a" style="left:2715.0px;top:1508.7px;width:12.0px;height:1.8px;background:#3b82f0;"></div>
<div class="a" style="left:3046.0px;top:1508.7px;width:2.0px;height:1.8px;background:#35b36a;"></div>
<div class="a" style="left:3048.0px;top:1508.7px;width:12.0px;height:1.8px;background:#3b82f0;"></div>
<div class="a" style="left:0.0px;top:1573.0px;width:3691.0px;height:34.5px;background:#edf2fb;border-top:1.3px solid #d3e0f7;border-bottom:1.3px solid #d3e0f7;"></div>
<div class="a" style="left:174.0px;top:1573.0px;width:1.5px;height:257.0px;background:#d3e0f7;"></div>
<div class="a" style="left:0.0px;top:1607.5px;width:174.0px;height:26.1px;background:#fff;"></div>
<div class="t r" style="left:88.7px;top:1612.9px;font-size:15.8px;color:#2e3238;">trend-change</div>
<div class="a" style="left:0.0px;top:1633.5px;width:174.0px;height:26.1px;background:#f6f8fd;"></div>
<div class="t r" style="left:88.7px;top:1638.9px;font-size:15.8px;color:#2e3238;">trend-change</div>
<div class="a" style="left:0.0px;top:1659.6px;width:174.0px;height:26.1px;background:#e2e4e2;"></div>
<div class="t r" style="left:88.7px;top:1665.0px;font-size:15.8px;color:#2e3238;">trend-change</div>
<div class="a" style="left:0.0px;top:1685.7px;width:174.0px;height:26.1px;background:#f6f8fd;"></div>
<div class="t r" style="left:88.7px;top:1691.0px;font-size:15.8px;color:#2e3238;">trend-change</div>
<div class="a" style="left:0.0px;top:1711.7px;width:174.0px;height:26.1px;background:#fff;"></div>
<div class="t r" style="left:88.7px;top:1717.1px;font-size:15.8px;color:#2e3238;">trend-change</div>
<div class="a" style="left:0.0px;top:1737.8px;width:174.0px;height:26.1px;background:#f6f8fd;"></div>
<div class="t r" style="left:88.7px;top:1743.1px;font-size:15.8px;color:#2e3238;">trend-change</div>
<div class="a" style="left:0.0px;top:1763.8px;width:174.0px;height:26.1px;background:#fff;"></div>
<div class="t r" style="left:88.7px;top:1769.2px;font-size:15.8px;color:#2e3238;">trend-change</div>
<svg class="a" style="left:193.5px;top:1584.5px" width="13" height="13" viewBox="0 0 13 13"><path d="M1 1 L12 12 M12 1 L1 12" stroke="#3a3d42" stroke-width="1.7"/></svg>
<div class="t " style="left:231.6px;top:1582.5px;font-size:15px;color:#3f4349;">标头</div>
<div class="t " style="left:286.7px;top:1582.5px;font-size:15px;color:#3f4349;">载荷</div>
<div class="t " style="left:396.6px;top:1582.5px;font-size:15px;color:#3f4349;">响应</div>
<div class="t " style="left:451.0px;top:1582.5px;font-size:15px;color:#3f4349;">启动器</div>
<div class="t " style="left:341.5px;top:1582.5px;font-size:15px;color:#0b57d0;">预览</div>
<div class="a" style="left:330.0px;top:1605.3px;width:54.6px;height:2.5px;background:#0b57d0;"></div>
<svg class="a" style="left:187.5px;top:1619.7px" width="10" height="10" viewBox="0 0 10 10"><path d="M0 1 h10 l-5 8 Z" fill="#2b2e33"/></svg>
<div class="t m" style="left:202.9px;top:1617.1px;font-size:14.6px;color:#2b2e33;letter-spacing:-0.6px">{success: true, message: "操作成功！", code: "200", result: {…}}</div>
<div class="t m" style="left:217.7px;top:1637.1px;font-size:14.6px;color:#2b2e33;letter-spacing:-0.6px"><span style="color:#8f1a58">code</span>: <span style="color:#c8321f">"200"</span></div>
<div class="t m" style="left:217.7px;top:1657.0px;font-size:14.6px;color:#2b2e33;letter-spacing:-0.6px"><span style="color:#8f1a58">message</span>: <span style="color:#c8321f">"操作成功！"</span></div>
<svg class="a" style="left:202.5px;top:1679.5px" width="10" height="10" viewBox="0 0 10 10"><path d="M0 1 h10 l-5 8 Z" fill="#2b2e33"/></svg>
<div class="t m" style="left:217.7px;top:1677.0px;font-size:14.6px;color:#2b2e33;letter-spacing:-0.6px"><span style="color:#8f1a58">result</span>: {negativeRateAvg: "0.54", trend: Array(31)}</div>
<div class="t m" style="left:232.4px;top:1696.9px;font-size:14.6px;color:#2b2e33;letter-spacing:-0.6px"><span style="color:#8f1a58">negativeRateAvg</span>: <span style="color:#c8321f">"0.54"</span></div>
<svg class="a" style="left:217.5px;top:1719.5px" width="10" height="10" viewBox="0 0 10 10"><path d="M0 1 h10 l-5 8 Z" fill="#2b2e33"/></svg>
<div class="t m" style="left:232.4px;top:1716.9px;font-size:14.6px;color:#2b2e33;letter-spacing:-0.6px"><span style="color:#8f1a58">trend</span>: [{date: "2025-09-12", negativeRate: "0.00"}, …]</div>
<svg class="a" style="left:233.5px;top:1739.4px" width="10" height="10" viewBox="0 0 10 10"><path d="M1 0 v10 l8 -5 Z" fill="#2b2e33"/></svg>
<div class="t m" style="left:247.6px;top:1736.8px;font-size:14.6px;color:#2b2e33;letter-spacing:-0.6px"><span style="color:#8f1a58">0</span>: {date: "2025-09-12", negativeRate: "0.00", mention: 0}</div>
<svg class="a" style="left:233.5px;top:1759.4px" width="10" height="10" viewBox="0 0 10 10"><path d="M1 0 v10 l8 -5 Z" fill="#2b2e33"/></svg>
<div class="t m" style="left:247.6px;top:1756.8px;font-size:14.6px;color:#2b2e33;letter-spacing:-0.6px"><span style="color:#8f1a58">1</span>: {date: "2025-09-13", negativeRate: "0.00", mention: 0}</div>
<svg class="a" style="left:233.5px;top:1779.3px" width="10" height="10" viewBox="0 0 10 10"><path d="M1 0 v10 l8 -5 Z" fill="#2b2e33"/></svg>
<div class="t m" style="left:247.6px;top:1776.7px;font-size:14.6px;color:#2b2e33;letter-spacing:-0.6px"><span style="color:#8f1a58">2</span>: {date: "2025-09-14", negativeRate: "0.00", mention: 0}</div>
<svg class="a" style="left:233.5px;top:1799.2px" width="10" height="10" viewBox="0 0 10 10"><path d="M1 0 v10 l8 -5 Z" fill="#2b2e33"/></svg>
<div class="t m" style="left:247.6px;top:1796.7px;font-size:14.6px;color:#2b2e33;letter-spacing:-0.6px"><span style="color:#8f1a58">3</span>: {date: "2025-09-15", negativeRate: "0.00", mention: 0}</div>
<svg class="a" style="left:233.5px;top:1819.2px" width="10" height="10" viewBox="0 0 10 10"><path d="M1 0 v10 l8 -5 Z" fill="#2b2e33"/></svg>
<div class="t m" style="left:247.6px;top:1816.6px;font-size:14.6px;color:#2b2e33;letter-spacing:-0.6px"><span style="color:#8f1a58">4</span>: {date: "2025-09-16", negativeRate: "0.00", mention: 0}</div>
<!-- popup window -->
<div class="a" style="left:464.5px;top:1047.5px;width:1748.2px;height:800px;background:#fff;border-radius:11px 11px 0 0;box-shadow:0 6px 34px 6px rgba(0,0,0,.22),0 0 0 1px rgba(90,90,90,.32);overflow:hidden">
<div class="a" style="left:0.0px;top:0.0px;width:1748.2px;height:49.5px;background:#ebebeb;"></div>
<div class="a" style="left:0.0px;top:49.5px;width:1748.2px;height:52.0px;background:#fff;"></div>
<div class="a" style="left:0.0px;top:101.5px;width:319.5px;height:700.0px;background:#fff;"></div>
<div class="a" style="left:319.5px;top:101.5px;width:1430.0px;height:700.0px;background:#ecf2fe;"></div>
<div class="a" style="left:319.3px;top:101.5px;width:1.4px;height:700.0px;background:#dfe3ea;"></div>
<div class="a" style="left:0.0px;top:205.0px;width:319.5px;height:1.4px;background:#dcdfe5;"></div>
<div class="a" style="left:319.5px;top:205.0px;width:1430.0px;height:1.4px;background:#d9e0ee;"></div>
<div class="a" style="left:350.5px;top:236.2px;width:1500.0px;height:700.0px;background:#fff;border-radius:16px 0 0 0;"></div>
</div>
<svg class="a" style="left:482px;top:1061px" width="20" height="23" viewBox="0 0 20 23"><path d="M6.4 2 h7.2 l-1.3 6.8 l4.2 5 h-13 l4.2 -5 Z" fill="none" stroke="#1bb55c" stroke-width="1.5" stroke-linejoin="round"/><path d="M10 13.8 v7.6" stroke="#1bb55c" stroke-width="1.5" stroke-linecap="round"/></svg>
<div class="a" style="left:2071.0px;top:1071.2px;width:12.0px;height:1.2px;background:#333;"></div>
<div class="a" style="left:2126px;top:1066px;width:12px;height:12px;border:1.3px solid #333;border-radius:2px"></div>
<svg class="a" style="left:2180px;top:1065.3px" width="14" height="14" viewBox="0 0 14 14"><path d="M1 1 L13 13 M13 1 L1 13" stroke="#333" stroke-width="1.250"/></svg>
<svg class="a" style="left:480.5px;top:1115px" width="15" height="15" viewBox="0 0 15 15"><rect x="1" y="4.2" width="8.6" height="9" rx="1.6" fill="none" stroke="#474c55" stroke-width="1.4"/><path d="M5 4 v-1.6 a1.4 1.4 0 0 1 1.4 -1.4 h6 a1.4 1.4 0 0 1 1.4 1.4 v6 a1.4 1.4 0 0 1 -1.4 1.4 h-2.6" fill="none" stroke="#474c55" stroke-width="1.4"/></svg>
<div class="a" style="left:513.2px;top:1111.5px;width:1.4px;height:23.0px;background:#d5d8dd;"></div>
<svg class="a" style="left:532px;top:1115px" width="17" height="15" viewBox="0 0 17 15"><path d="M1.4 3 a1.4 1.4 0 0 1 1.4 -1.4 h3.6 l1.8 1.9 h6 a1.4 1.4 0 0 1 1.4 1.4 v7 a1.4 1.4 0 0 1 -1.4 1.4 h-11.4 a1.4 1.4 0 0 1 -1.4 -1.4 Z" fill="none" stroke="#3f444d" stroke-width="1.5"/></svg>
<div class="t " style="left:555.3px;top:1115.6px;font-size:14.8px;color:#3a3f4a;">3D打印素材网</div>
<svg class="a" style="left:670.5px;top:1115px" width="15" height="15" viewBox="0 0 15 15"><circle cx="7.5" cy="7.5" r="6.4" fill="none" stroke="#777c85" stroke-width="1.3"/><path d="M3.4 7.4 c1.4 -2.6 3.4 -2.4 4 -0.4 c.6 2 2.8 1.6 3.8 0.2 M6.6 11 c1.4 -.8 3.4 -.6 4.4 -1.6" fill="none" stroke="#777c85" stroke-width="1.2"/></svg>
<div class="t " style="left:691.6px;top:1115.6px;font-size:14.8px;color:#3a3f4a;">PC游戏-咸鱼单机</div>
<div class="t " style="left:829.5px;top:1115.6px;font-size:14.8px;color:#63b0f7;">O.</div>
<div class="t " style="left:847.0px;top:1115.6px;font-size:14.8px;color:#3a3f4a;">爆火Flux.1文生图神...</div>
<svg class="a" style="left:1019.5px;top:1115px" width="15" height="16" viewBox="0 0 15 16"><path d="M12.4 3.2 a6 6 0 1 0 0 9.2" fill="none" stroke="#2f54eb" stroke-width="3"/><circle cx="9.8" cy="7.8" r="2.1" fill="#f5a623"/></svg>
<div class="t " style="left:1039.5px;top:1115.1px;font-size:15.8px;color:#3a3f4a;">admin-test.funu.fun</div>
<svg class="a" style="left:1202.5px;top:1115px" width="15" height="15" viewBox="0 0 15 15"><circle cx="7.5" cy="7.5" r="6" fill="none" stroke="#2f8df5" stroke-width="1.4"/><path d="M1.5 7.5 h12 M7.5 1.5 c-3 3 -3 9 0 12 M7.5 1.5 c3 3 3 9 0 12" fill="none" stroke="#2f8df5" stroke-width="1.1"/><circle cx="10.8" cy="10.4" r="2.4" fill="#2f8df5"/></svg>
<div class="t " style="left:1222.0px;top:1115.6px;font-size:14.8px;color:#3a3f4a;">经纬度查询定位 拾取...</div>
<svg class="a" style="left:1394px;top:1114px" width="16" height="16" viewBox="0 0 16 16"><rect x="1.2" y="4" width="13.6" height="10" rx="2.4" fill="none" stroke="#23ade5" stroke-width="1.7"/><path d="M4.6 1 l2 3 M11.4 1 l-2 3" stroke="#23ade5" stroke-width="1.6" stroke-linecap="round"/><path d="M5.2 7.6 v2 M10.8 7.6 v2" stroke="#23ade5" stroke-width="1.6" stroke-linecap="round"/></svg>
<div class="t " style="left:1417.6px;top:1115.6px;font-size:14.8px;color:#3a3f4a;">【鬼泣5】白嫖3A大...</div>
<svg class="a" style="left:1586.5px;top:1115.5px" width="17" height="14" viewBox="0 0 17 14"><path d="M1 1.4 c2.6 -.8 5 -.6 7.5 1 c2.5 -1.6 4.900 -1.8 7.5 -1 v10.6 c-2.600 -.8 -5 -.6 -7.5 1 c-2.500 -1.600 -4.900 -1.800 -7.500 -1 Z M8.500 2.400 v10.600" fill="none" stroke="#444" stroke-width="1.5"/><path d="M3 4 h3.600 M3 6.400 h3.600 M3 8.800 h3.600 M10.400 4 h3.600 M10.400 6.400 h3.600 M10.400 8.800 h3.600" stroke="#444" stroke-width="1"/></svg>
<div class="t " style="left:1606.0px;top:1115.6px;font-size:14.8px;color:#3a3f4a;">开通隧道 · Sunny-N...</div>
<div class="a" style="left:1779.0px;top:1115.0px;width:15.5px;height:15.5px;background:#0a1f8f;"></div>
<div class="t b" style="left:1782.0px;top:1114.5px;font-size:14px;color:#fff;">n</div>
<div class="t " style="left:1799.0px;top:1115.0px;font-size:16px;color:#3a3f4a;word-spacing:1.5px;">Setup - ngrok</div>
<div class="a" style="left:1919.0px;top:1115.0px;width:15.5px;height:15.5px;background:#f4511e;"></div>
<div class="t " style="left:1921.6px;top:1115.5px;font-size:15px;color:#fff;">C</div>
<div class="t " style="left:1938.0px;top:1115.6px;font-size:14.8px;color:#3a3f4a;">【保姆级别教程】V...</div>
<svg class="a" style="left:2111px;top:1114.5px" width="16" height="16" viewBox="0 0 16 16"><circle cx="8" cy="8" r="6.6" fill="#fff" stroke="#6a3df5" stroke-width="1.8"/><ellipse cx="5.6" cy="8" rx="1.1" ry="1.7" fill="#1c1c1c"/><ellipse cx="10.4" cy="8" rx="1.1" ry="1.7" fill="#1c1c1c"/></svg>
<div class="a" style="left:2131.7px;top:1110px;width:81.5px;height:26px;overflow:hidden"><div class="t" style="left:0;top:5.2px;font-size:15.8px;color:#3a3f4a">Monica API</div></div>
<div class="a" style="left:480.0px;top:1171.0px;width:60.0px;height:60.0px;background:#0b4280;border-radius:8px;"></div>
<div class="t b c" style="left:510.0px;top:1190.1px;font-size:11.8px;color:#fff;">长安汽车</div>
<div class="t b c" style="left:510.3px;top:1204.3px;font-size:8.4px;color:#fff;letter-spacing:.7px;">CHANGAN</div>
<div class="t b" style="left:552.5px;top:1189.0px;font-size:24.9px;color:#0e3f7e;">VOC客情直驱平台</div>
<div class="t b" style="left:824.0px;top:1186.4px;font-size:30.2px;color:#1d2129;">VoC主控台</div>
<div class="a" style="left:1014px;top:1176.5px;width:480.5px;height:49px;background:#fff;border:1.3px solid #e3e8f1;border-radius:9px"></div>
<svg class="a" style="left:1026.5px;top:1192.5px" width="17" height="17" viewBox="0 0 17 17"><rect x="1.2" y="2.6" width="14.6" height="13" rx="1.6" fill="none" stroke="#c3c7cf" stroke-width="1.4"/><path d="M1.2 6.4 h14.600 M5 1 v3 M12 1 v3" stroke="#c3c7cf" stroke-width="1.4"/><path d="M4 9 h1.600 M7.600 9 h1.600 M11.200 9 h1.600 M4 12 h1.600 M7.600 12 h1.600 M11.200 12 h1.600" stroke="#c3c7cf" stroke-width="1.300"/></svg>
<div class="t c" style="left:1133.0px;top:1192.0px;font-size:19.1px;color:#5a606b;">2025-09-12</div>
<div class="t c" style="left:1254.5px;top:1191.5px;font-size:20px;color:#5a606b;">-</div>
<div class="t c" style="left:1376.0px;top:1192.0px;font-size:19.1px;color:#5a606b;">2025-10-12</div>
<div class="a" style="left:480.0px;top:1283.7px;width:284.0px;height:59.5px;background:#eaf2ff;border-radius:9px;"></div>
<svg class="a" style="left:496px;top:1300px" width="28" height="26" viewBox="0 0 28 26"><path d="M14 1 L27 11.600 H23.400 V25 H4.600 V11.600 H1 Z" fill="#1677ff"/><path d="M10.400 16.200 a3.700 3.700 0 0 0 7.200 0" fill="none" stroke="#eaf2ff" stroke-width="2" stroke-linecap="round"/></svg>
<div class="t b" style="left:535.0px;top:1304.0px;font-size:20px;color:#1677ff;">VOC总览</div>
<svg class="a" style="left:498.5px;top:1382.5px" width="23" height="23" viewBox="0 0 23 23"><rect x="0.500" y="0.500" width="9.500" height="9.500" rx="1" fill="#9299a6"/><rect x="0.500" y="12.500" width="9.500" height="9.500" rx="1" fill="#9299a6"/><rect x="12.500" y="12.500" width="9.500" height="9.500" rx="1" fill="#9299a6"/><path d="M17.200 1 v8.400 M13 5.200 h8.400" stroke="#9299a6" stroke-width="2"/></svg>
<div class="t b" style="left:535.0px;top:1384.5px;font-size:20.5px;color:#4e5561;">场景分析</div>
<div class="t " style="left:535.0px;top:1439.8px;font-size:20.5px;color:#646a75;">集团分析</div>
<div class="t " style="left:535.0px;top:1489.8px;font-size:20.5px;color:#646a75;">本品分析</div>
<div class="t " style="left:535.0px;top:1539.8px;font-size:20.5px;color:#646a75;">旅程分析</div>
<div class="t " style="left:535.0px;top:1589.8px;font-size:20.5px;color:#646a75;">产品分析</div>
<div class="t " style="left:535.0px;top:1639.8px;font-size:20.5px;color:#646a75;">服务分析</div>
<svg class="a" style="left:497px;top:1711px" width="26" height="26" viewBox="0 0 26 26"><path d="M10.800 1 h4.400 l.7 3.300 l2.400 1.400 l3.200 -1.100 l2.200 3.800 l-2.500 2.200 v2.800 l2.500 2.200 l-2.200 3.800 l-3.200 -1.100 l-2.400 1.400 l-.7 3.300 h-4.400 l-.7 -3.300 l-2.400 -1.400 l-3.200 1.100 l-2.200 -3.800 l2.500 -2.200 v-2.800 l-2.500 -2.200 l2.200 -3.800 l3.200 1.100 l2.400 -1.400 Z" fill="#9299a6"/><circle cx="13" cy="13" r="4.200" fill="#fff"/></svg>
<div class="t b" style="left:535.0px;top:1713.8px;font-size:20.5px;color:#4e5561;">系统管理</div>
<div class="t " style="left:535.0px;top:1768.8px;font-size:20.5px;color:#646a75;">账户管理</div>
<div class="t " style="left:535.0px;top:1816.2px;font-size:20.5px;color:#646a75;">角色管理</div>
<div class="t b" style="left:845.0px;top:1316.5px;font-size:29.5px;color:#1d2129;">市场横评</div>
<div class="t " style="left:985.0px;top:1322.7px;font-size:17.6px;color:#3d424c;">(该板块仅对公域渠道数据进行统计分析)</div>
<svg width="0" height="0" style="position:absolute"><defs><linearGradient id="fr" x1="0" y1="0" x2="0" y2="1"><stop offset="0" stop-color="#f9b9be" stop-opacity=".6"/><stop offset="1" stop-color="#f9b9be" stop-opacity=".08"/></linearGradient><linearGradient id="fb" x1="0" y1="0" x2="0" y2="1"><stop offset="0" stop-color="#b9c3d6" stop-opacity=".65"/><stop offset="1" stop-color="#b9c3d6" stop-opacity=".08"/></linearGradient></defs></svg>
<div class="a" style="left:845.0px;top:1379px;width:344px;height:412.5px;background:#ebf3ff;border:2.4px solid #1677ff;border-radius:12px"></div>
<div class="a" style="left:867.7px;top:1402.0px;width:33.7px;height:33.7px;background:#0b4280;border-radius:5px;"></div>
<div class="t c b" style="left:884.5px;top:1414.4px;font-size:6.2px;color:#dfe8f5;">长安汽车</div>
<div class="t c b" style="left:884.5px;top:1421.2px;font-size:3.6px;color:#dfe8f5;">CHANGAN</div>
<div class="t b" style="left:912.7px;top:1410.3px;font-size:20px;color:#1d2129;">长安汽车集团</div>
<div class="a" style="left:1133.3px;top:1401.3px;width:33.0px;height:33.0px;background:#f1f2f5;border-radius:5px;"></div>
<svg class="a" style="left:1143.8px;top:1411.8px" width="12" height="12" viewBox="0 0 12 12"><path d="M2 10 L10 2 M3.600 2 H10 V8.400" fill="none" stroke="#9aa1ad" stroke-width="1.600"/></svg>
<div class="t " style="left:876.8px;top:1471.7px;font-size:17.6px;color:#6b7583;">竞企</div>
<div class="t r" style="left:1092.0px;top:1471.7px;font-size:17.6px;color:#6b7583;">提及量</div>
<div class="t r" style="left:1166.8px;top:1471.7px;font-size:17.6px;color:#6b7583;">负面率</div>
<div class="a" style="left:867.0px;top:1504.7px;width:300.0px;height:1.4px;background:#dfe3ea;"></div>
<div class="a" style="left:867.0px;top:1558.6px;width:300.0px;height:1.3px;background:#e6e9ef;"></div>
<svg class="a" style="left:866.3px;top:1519.1px" width="26" height="26" viewBox="0 0 26 26"><path d="M12.500 0.500 c1.500 3.500 5 5 8 8.500 c3 3.500 4.500 6.500 4.500 10 c0 4 -3 7 -12 7 c-9 0 -12.500 -3 -12.500 -7 c0 -4 3 -6.500 6 -9.500 c2.500 -2.500 5 -5 6 -9 Z" fill="url(#fr)"/></svg>
<div class="t c" style="left:879.3px;top:1523.8px;font-size:19.5px;color:#f5515a;">1</div>
<div class="t " style="left:928.5px;top:1524.8px;font-size:17.6px;color:#30343b;">长安凯程</div>
<div class="t c" style="left:1055.5px;top:1524.4px;font-size:18.4px;color:#30343b;">50</div>
<div class="t c" style="left:1130.2px;top:1524.5px;font-size:18.2px;color:#30343b;">46.00%</div>
<div class="a" style="left:867.0px;top:1613.2px;width:300.0px;height:1.3px;background:#e6e9ef;"></div>
<svg class="a" style="left:866.3px;top:1573.7px" width="26" height="26" viewBox="0 0 26 26"><path d="M12.500 0.500 c1.500 3.500 5 5 8 8.500 c3 3.500 4.500 6.500 4.500 10 c0 4 -3 7 -12 7 c-9 0 -12.500 -3 -12.500 -7 c0 -4 3 -6.500 6 -9.500 c2.500 -2.500 5 -5 6 -9 Z" fill="url(#fr)"/></svg>
<div class="t c" style="left:879.3px;top:1578.4px;font-size:19.5px;color:#f5515a;">2</div>
<svg class="a" style="left:897.5px;top:1583.2px" width="8" height="6" viewBox="0 0 8 6"><path d="M0 0 h8 l-4 5.400 Z" fill="#52c41a"/></svg>
<div class="t " style="left:909.3px;top:1581.7px;font-size:14px;color:#52c41a;">1</div>
<div class="t " style="left:928.5px;top:1579.4px;font-size:17.6px;color:#30343b;">长安汽车</div>
<div class="t c" style="left:1055.5px;top:1579.0px;font-size:18.4px;color:#30343b;">589</div>
<div class="t c" style="left:1130.2px;top:1579.1px;font-size:18.2px;color:#30343b;">27.33%</div>
<div class="a" style="left:867.0px;top:1667.8px;width:300.0px;height:1.3px;background:#e6e9ef;"></div>
<svg class="a" style="left:866.3px;top:1628.3px" width="26" height="26" viewBox="0 0 26 26"><path d="M12.500 0.500 c1.500 3.500 5 5 8 8.500 c3 3.500 4.500 6.500 4.500 10 c0 4 -3 7 -12 7 c-9 0 -12.500 -3 -12.500 -7 c0 -4 3 -6.500 6 -9.500 c2.500 -2.500 5 -5 6 -9 Z" fill="url(#fr)"/></svg>
<div class="t c" style="left:879.3px;top:1633.0px;font-size:19.5px;color:#f5515a;">3</div>
<div class="t " style="left:928.5px;top:1634.0px;font-size:17.6px;color:#30343b;">深蓝汽车</div>
<div class="t c" style="left:1055.5px;top:1633.6px;font-size:18.4px;color:#30343b;">232</div>
<div class="t c" style="left:1130.2px;top:1633.7px;font-size:18.2px;color:#30343b;">16.81%</div>
<div class="a" style="left:867.0px;top:1722.4px;width:300.0px;height:1.3px;background:#e6e9ef;"></div>
<svg class="a" style="left:866.3px;top:1682.9px" width="26" height="26" viewBox="0 0 26 26"><path d="M12.500 0.500 c1.500 3.500 5 5 8 8.500 c3 3.500 4.500 6.500 4.500 10 c0 4 -3 7 -12 7 c-9 0 -12.500 -3 -12.500 -7 c0 -4 3 -6.500 6 -9.500 c2.500 -2.500 5 -5 6 -9 Z" fill="url(#fb)"/></svg>
<div class="t c b" style="left:879.3px;top:1687.6px;font-size:19.5px;color:#4a5a78;">4</div>
<div class="t " style="left:928.5px;top:1688.6px;font-size:17.6px;color:#30343b;">领克</div>
<div class="t c" style="left:1055.5px;top:1688.2px;font-size:18.4px;color:#30343b;">130</div>
<div class="t c" style="left:1130.2px;top:1688.3px;font-size:18.2px;color:#30343b;">10.00%</div>
<div class="a" style="left:867.0px;top:1723.8px;width:300.0px;height:53.9px;background:#e4f7fe;"></div>
<div class="t c" style="left:879.3px;top:1742.5px;font-size:19px;color:#3d424c;">-</div>
<div class="t " style="left:928.5px;top:1743.2px;font-size:17.6px;color:#30343b;">市场均值</div>
<div class="t c" style="left:1055.5px;top:1742.8px;font-size:18.4px;color:#30343b;">156.43</div>
<div class="t c" style="left:1130.2px;top:1742.9px;font-size:18.2px;color:#30343b;">9.61%</div>
<div class="a" style="left:1210.0px;top:1379px;width:344px;height:412.5px;background:#f5f7fb;border:1.5px solid #e4e7ee;border-radius:12px;box-shadow:0 1px 3px rgba(0,0,0,.05)"></div>
<svg class="a" style="left:1231.0px;top:1399.8px" width="34" height="34" viewBox="0 0 34 34"><rect width="34" height="34" rx="9" fill="#fff"/><ellipse cx="17" cy="17" rx="13.600" ry="11.800" fill="none" stroke="#1d4f91" stroke-width="2.800"/><path d="M9.200 7.600 h4.200 l3.600 13.400 l3.600 -13.400 h4.200 l-5.400 19 h-4.800 Z" fill="#0b3f7f"/></svg>
<div class="t b" style="left:1276.0px;top:1409.2px;font-size:20px;color:#1d2129;">长安引力</div>
<div class="a" style="left:1499.6px;top:1401.0px;width:33.0px;height:33.0px;background:#f1f2f5;border-radius:5px;"></div>
<svg class="a" style="left:1510.1px;top:1411.5px" width="12" height="12" viewBox="0 0 12 12"><path d="M2 10 L10 2 M3.600 2 H10 V8.400" fill="none" stroke="#9aa1ad" stroke-width="1.600"/></svg>
<div class="t " style="left:1239.8px;top:1471.7px;font-size:17.6px;color:#6b7583;">竞品</div>
<div class="t r" style="left:1456.0px;top:1471.7px;font-size:17.6px;color:#6b7583;">提及量</div>
<div class="t r" style="left:1530.7px;top:1471.7px;font-size:17.6px;color:#6b7583;">负面率</div>
<div class="a" style="left:1230.6px;top:1503.8px;width:302.8px;height:1.4px;background:#dfe3ea;"></div>
<div class="a" style="left:1230.6px;top:1557.7px;width:302.8px;height:1.3px;background:#e6e9ef;"></div>
<svg class="a" style="left:1229.6px;top:1517.8px" width="26" height="26" viewBox="0 0 26 26"><path d="M12.500 0.500 c1.500 3.500 5 5 8 8.500 c3 3.500 4.500 6.500 4.500 10 c0 4 -3 7 -12 7 c-9 0 -12.500 -3 -12.500 -7 c0 -4 3 -6.500 6 -9.500 c2.500 -2.500 5 -5 6 -9 Z" fill="url(#fr)"/></svg>
<div class="t c" style="left:1242.6px;top:1522.5px;font-size:19.5px;color:#f5515a;">1</div>
<div class="t " style="left:1292.3px;top:1523.5px;font-size:17.6px;color:#30343b;">长安凯程</div>
<div class="t c" style="left:1421.3px;top:1523.1px;font-size:18.4px;color:#30343b;">46</div>
<div class="t c" style="left:1496.0px;top:1523.2px;font-size:18.2px;color:#30343b;">52.17%</div>
<div class="a" style="left:1230.6px;top:1559.1px;width:302.8px;height:53.9px;background:#eaf0ff;"></div>
<div class="a" style="left:1230.6px;top:1612.3px;width:302.8px;height:1.3px;background:#e6e9ef;"></div>
<svg class="a" style="left:1229.6px;top:1572.4px" width="26" height="26" viewBox="0 0 26 26"><path d="M12.500 0.500 c1.500 3.500 5 5 8 8.500 c3 3.500 4.500 6.500 4.500 10 c0 4 -3 7 -12 7 c-9 0 -12.500 -3 -12.500 -7 c0 -4 3 -6.500 6 -9.500 c2.500 -2.500 5 -5 6 -9 Z" fill="url(#fr)"/></svg>
<div class="t c" style="left:1242.6px;top:1577.1px;font-size:19.5px;color:#f5515a;">2</div>
<svg class="a" style="left:1260.8px;top:1581.9px" width="8" height="6" viewBox="0 0 8 6"><path d="M0 0 h8 l-4 5.400 Z" fill="#52c41a"/></svg>
<div class="t " style="left:1272.6px;top:1580.4px;font-size:14px;color:#52c41a;">1</div>
<div class="t " style="left:1292.3px;top:1578.1px;font-size:17.6px;color:#3d7bfd;">长安引力</div>
<div class="t c" style="left:1421.3px;top:1577.7px;font-size:18.4px;color:#3d7bfd;">593</div>
<div class="t c" style="left:1496.0px;top:1577.8px;font-size:18.2px;color:#30343b;">26.98%</div>
<div class="a" style="left:1230.6px;top:1666.9px;width:302.8px;height:1.3px;background:#e6e9ef;"></div>
<svg class="a" style="left:1229.6px;top:1627.0px" width="26" height="26" viewBox="0 0 26 26"><path d="M12.500 0.500 c1.500 3.500 5 5 8 8.500 c3 3.500 4.500 6.500 4.500 10 c0 4 -3 7 -12 7 c-9 0 -12.500 -3 -12.500 -7 c0 -4 3 -6.500 6 -9.500 c2.500 -2.500 5 -5 6 -9 Z" fill="url(#fr)"/></svg>
<div class="t c" style="left:1242.6px;top:1631.8px;font-size:19.5px;color:#f5515a;">3</div>
<div class="t " style="left:1292.3px;top:1632.7px;font-size:17.6px;color:#30343b;">深蓝汽车</div>
<div class="t c" style="left:1421.3px;top:1632.3px;font-size:18.4px;color:#30343b;">232</div>
<div class="t c" style="left:1496.0px;top:1632.4px;font-size:18.2px;color:#30343b;">16.81%</div>
<div class="a" style="left:1230.6px;top:1721.5px;width:302.8px;height:1.3px;background:#e6e9ef;"></div>
<svg class="a" style="left:1229.6px;top:1681.6px" width="26" height="26" viewBox="0 0 26 26"><path d="M12.500 0.500 c1.500 3.500 5 5 8 8.500 c3 3.500 4.500 6.500 4.500 10 c0 4 -3 7 -12 7 c-9 0 -12.500 -3 -12.500 -7 c0 -4 3 -6.500 6 -9.500 c2.500 -2.500 5 -5 6 -9 Z" fill="url(#fb)"/></svg>
<div class="t c b" style="left:1242.6px;top:1686.3px;font-size:19.5px;color:#4a5a78;">4</div>
<div class="t " style="left:1292.3px;top:1687.3px;font-size:17.6px;color:#30343b;">领克</div>
<div class="t c" style="left:1421.3px;top:1686.9px;font-size:18.4px;color:#30343b;">130</div>
<div class="t c" style="left:1496.0px;top:1687.0px;font-size:18.2px;color:#30343b;">10.00%</div>
<div class="a" style="left:1230.6px;top:1722.9px;width:302.8px;height:53.9px;background:#e4f7fe;"></div>
<div class="t c" style="left:1242.6px;top:1741.2px;font-size:19px;color:#3d424c;">-</div>
<div class="t " style="left:1292.3px;top:1741.9px;font-size:17.6px;color:#30343b;">市场均值</div>
<div class="t c" style="left:1421.3px;top:1741.5px;font-size:18.4px;color:#30343b;">136.94</div>
<div class="t c" style="left:1496.0px;top:1741.6px;font-size:18.2px;color:#30343b;">8.80%</div>
<div class="a" style="left:1574.7px;top:1379px;width:344px;height:412.5px;background:#f5f7fb;border:1.5px solid #e4e7ee;border-radius:12px;box-shadow:0 1px 3px rgba(0,0,0,.05)"></div>
<svg class="a" style="left:1595.7px;top:1399.8px" width="34" height="34" viewBox="0 0 34 34"><rect width="34" height="34" rx="9" fill="#fff"/><rect x="10.400" y="10.600" width="13.200" height="12.800" rx="5.600" fill="none" stroke="#0b3f7f" stroke-width="3.200"/><path d="M5.600 10.400 c-1.600 4.400 -1.600 8.800 0 13.200 M28.400 10.400 c1.600 4.400 1.600 8.800 0 13.200" fill="none" stroke="#0b3f7f" stroke-width="2.600" stroke-linecap="round"/></svg>
<div class="t b" style="left:1640.7px;top:1409.2px;font-size:20px;color:#1d2129;">长安启源</div>
<div class="a" style="left:1864.3px;top:1401.0px;width:33.0px;height:33.0px;background:#f1f2f5;border-radius:5px;"></div>
<svg class="a" style="left:1874.8px;top:1411.5px" width="12" height="12" viewBox="0 0 12 12"><path d="M2 10 L10 2 M3.600 2 H10 V8.400" fill="none" stroke="#9aa1ad" stroke-width="1.600"/></svg>
<div class="t " style="left:1604.5px;top:1471.7px;font-size:17.6px;color:#6b7583;">竞品</div>
<div class="t r" style="left:1820.7px;top:1471.7px;font-size:17.6px;color:#6b7583;">提及量</div>
<div class="t r" style="left:1895.4px;top:1471.7px;font-size:17.6px;color:#6b7583;">负面率</div>
<div class="a" style="left:1595.3px;top:1503.8px;width:302.8px;height:1.4px;background:#dfe3ea;"></div>
<div class="a" style="left:1595.3px;top:1557.7px;width:302.8px;height:1.3px;background:#e6e9ef;"></div>
<svg class="a" style="left:1594.3px;top:1517.8px" width="26" height="26" viewBox="0 0 26 26"><path d="M12.500 0.500 c1.500 3.500 5 5 8 8.500 c3 3.500 4.500 6.500 4.500 10 c0 4 -3 7 -12 7 c-9 0 -12.500 -3 -12.500 -7 c0 -4 3 -6.500 6 -9.500 c2.500 -2.500 5 -5 6 -9 Z" fill="url(#fr)"/></svg>
<div class="t c" style="left:1607.3px;top:1522.5px;font-size:19.5px;color:#f5515a;">1</div>
<div class="t " style="left:1657.0px;top:1523.5px;font-size:17.6px;color:#30343b;">长安凯程</div>
<div class="t c" style="left:1786.0px;top:1523.1px;font-size:18.4px;color:#30343b;">46</div>
<div class="t c" style="left:1860.7px;top:1523.2px;font-size:18.2px;color:#30343b;">52.17%</div>
<div class="a" style="left:1595.3px;top:1612.3px;width:302.8px;height:1.3px;background:#e6e9ef;"></div>
<svg class="a" style="left:1594.3px;top:1572.4px" width="26" height="26" viewBox="0 0 26 26"><path d="M12.500 0.500 c1.500 3.500 5 5 8 8.500 c3 3.500 4.500 6.500 4.500 10 c0 4 -3 7 -12 7 c-9 0 -12.500 -3 -12.500 -7 c0 -4 3 -6.500 6 -9.500 c2.500 -2.500 5 -5 6 -9 Z" fill="url(#fr)"/></svg>
<div class="t c" style="left:1607.3px;top:1577.1px;font-size:19.5px;color:#f5515a;">2</div>
<svg class="a" style="left:1625.5px;top:1581.9px" width="8" height="6" viewBox="0 0 8 6"><path d="M0 0 h8 l-4 5.400 Z" fill="#52c41a"/></svg>
<div class="t " style="left:1637.3px;top:1580.4px;font-size:14px;color:#52c41a;">1</div>
<div class="t " style="left:1657.0px;top:1578.1px;font-size:17.6px;color:#30343b;">长安引力</div>
<div class="t c" style="left:1786.0px;top:1577.7px;font-size:18.4px;color:#30343b;">593</div>
<div class="t c" style="left:1860.7px;top:1577.8px;font-size:18.2px;color:#30343b;">26.98%</div>
<div class="a" style="left:1595.3px;top:1666.9px;width:302.8px;height:1.3px;background:#e6e9ef;"></div>
<svg class="a" style="left:1594.3px;top:1627.0px" width="26" height="26" viewBox="0 0 26 26"><path d="M12.500 0.500 c1.500 3.500 5 5 8 8.500 c3 3.500 4.500 6.500 4.500 10 c0 4 -3 7 -12 7 c-9 0 -12.500 -3 -12.500 -7 c0 -4 3 -6.500 6 -9.500 c2.500 -2.500 5 -5 6 -9 Z" fill="url(#fr)"/></svg>
<div class="t c" style="left:1607.3px;top:1631.8px;font-size:19.5px;color:#f5515a;">3</div>
<div class="t " style="left:1657.0px;top:1632.7px;font-size:17.6px;color:#30343b;">深蓝汽车</div>
<div class="t c" style="left:1786.0px;top:1632.3px;font-size:18.4px;color:#30343b;">232</div>
<div class="t c" style="left:1860.7px;top:1632.4px;font-size:18.2px;color:#30343b;">16.81%</div>
<div class="a" style="left:1595.3px;top:1668.3px;width:302.8px;height:53.9px;background:#e4f7fe;"></div>
<div class="a" style="left:1595.3px;top:1721.5px;width:302.8px;height:1.3px;background:#e6e9ef;"></div>
<div class="t c" style="left:1607.3px;top:1686.6px;font-size:19px;color:#3d424c;">-</div>
<div class="t " style="left:1657.0px;top:1687.3px;font-size:17.6px;color:#30343b;">市场均值</div>
<div class="t c" style="left:1786.0px;top:1686.9px;font-size:18.4px;color:#30343b;">136.94</div>
<div class="t c" style="left:1860.7px;top:1687.0px;font-size:18.2px;color:#30343b;">8.80%</div>
<div class="a" style="left:1595.3px;top:1722.9px;width:302.8px;height:53.9px;background:#eaf0ff;"></div>
<svg class="a" style="left:1594.3px;top:1736.2px" width="26" height="26" viewBox="0 0 26 26"><path d="M12.500 0.500 c1.500 3.500 5 5 8 8.500 c3 3.500 4.500 6.500 4.500 10 c0 4 -3 7 -12 7 c-9 0 -12.500 -3 -12.500 -7 c0 -4 3 -6.500 6 -9.500 c2.500 -2.500 5 -5 6 -9 Z" fill="url(#fb)"/></svg>
<div class="t c b" style="left:1607.3px;top:1741.0px;font-size:19.5px;color:#4a5a78;">5</div>
<div class="t " style="left:1657.0px;top:1741.9px;font-size:17.6px;color:#3d7bfd;">长安启源</div>
<div class="t c" style="left:1786.0px;top:1741.5px;font-size:18.4px;color:#3d7bfd;">268</div>
<div class="t c" style="left:1860.7px;top:1741.6px;font-size:18.2px;color:#30343b;">8.21%</div>
<div class="a" style="left:1930px;top:1370px;width:283.5px;height:440px;overflow:hidden"><div class="a" style="left:-1930px;top:-1370px;width:3691px;height:1830px">
<div class="a" style="left:1939.7px;top:1379px;width:344px;height:412.5px;background:#f5f7fb;border:1.5px solid #e4e7ee;border-radius:12px;box-shadow:0 1px 3px rgba(0,0,0,.05)"></div>
<svg class="a" style="left:1960.7px;top:1399.8px" width="34" height="34" viewBox="0 0 34 34"><rect width="34" height="34" rx="9" fill="#fff"/><path d="M17 5 L28 11.200 V22.800 L17 29 L6 22.800 V11.200 Z" fill="#0b3f7f"/><path d="M17 11.200 L24.400 15.400 L17 19.600 L9.600 15.400 Z" fill="#fff"/></svg>
<div class="t b" style="left:2005.7px;top:1409.2px;font-size:20px;color:#1d2129;">长安凯程</div>
<div class="a" style="left:2229.3px;top:1401.0px;width:33.0px;height:33.0px;background:#f1f2f5;border-radius:5px;"></div>
<svg class="a" style="left:2239.8px;top:1411.5px" width="12" height="12" viewBox="0 0 12 12"><path d="M2 10 L10 2 M3.600 2 H10 V8.400" fill="none" stroke="#9aa1ad" stroke-width="1.600"/></svg>
<div class="t " style="left:1969.5px;top:1471.7px;font-size:17.6px;color:#6b7583;">竞品</div>
<div class="t r" style="left:2185.7px;top:1471.7px;font-size:17.6px;color:#6b7583;">提及量</div>
<div class="t r" style="left:2260.4px;top:1471.7px;font-size:17.6px;color:#6b7583;">负面率</div>
<div class="a" style="left:1960.3px;top:1503.8px;width:302.8px;height:1.4px;background:#dfe3ea;"></div>
<div class="a" style="left:1960.3px;top:1504.5px;width:302.8px;height:53.9px;background:#eaf0ff;"></div>
<div class="a" style="left:1960.3px;top:1557.7px;width:302.8px;height:1.3px;background:#e6e9ef;"></div>
<svg class="a" style="left:1959.3px;top:1517.8px" width="26" height="26" viewBox="0 0 26 26"><path d="M12.500 0.500 c1.500 3.500 5 5 8 8.500 c3 3.500 4.500 6.500 4.500 10 c0 4 -3 7 -12 7 c-9 0 -12.500 -3 -12.500 -7 c0 -4 3 -6.500 6 -9.500 c2.500 -2.500 5 -5 6 -9 Z" fill="url(#fr)"/></svg>
<div class="t c" style="left:1972.3px;top:1522.5px;font-size:19.5px;color:#f5515a;">1</div>
<div class="t " style="left:2022.0px;top:1523.5px;font-size:17.6px;color:#3d7bfd;">长安凯程</div>
<div class="t c" style="left:2151.0px;top:1523.1px;font-size:18.4px;color:#3d7bfd;">46</div>
<div class="t c" style="left:2225.7px;top:1523.2px;font-size:18.2px;color:#30343b;">52.17%</div>
<div class="a" style="left:1960.3px;top:1612.3px;width:302.8px;height:1.3px;background:#e6e9ef;"></div>
<svg class="a" style="left:1959.3px;top:1572.4px" width="26" height="26" viewBox="0 0 26 26"><path d="M12.500 0.500 c1.500 3.500 5 5 8 8.500 c3 3.500 4.500 6.500 4.500 10 c0 4 -3 7 -12 7 c-9 0 -12.500 -3 -12.500 -7 c0 -4 3 -6.500 6 -9.500 c2.500 -2.500 5 -5 6 -9 Z" fill="url(#fr)"/></svg>
<div class="t c" style="left:1972.3px;top:1577.1px;font-size:19.5px;color:#f5515a;">2</div>
<svg class="a" style="left:1990.5px;top:1581.9px" width="8" height="6" viewBox="0 0 8 6"><path d="M0 0 h8 l-4 5.400 Z" fill="#52c41a"/></svg>
<div class="t " style="left:2002.3px;top:1580.4px;font-size:14px;color:#52c41a;">1</div>
<div class="t " style="left:2022.0px;top:1578.1px;font-size:17.6px;color:#30343b;">长安引力</div>
<div class="t c" style="left:2151.0px;top:1577.7px;font-size:18.4px;color:#30343b;">593</div>
<div class="t c" style="left:2225.7px;top:1577.8px;font-size:18.2px;color:#30343b;">26.98%</div>
<div class="a" style="left:1960.3px;top:1666.9px;width:302.8px;height:1.3px;background:#e6e9ef;"></div>
<svg class="a" style="left:1959.3px;top:1627.0px" width="26" height="26" viewBox="0 0 26 26"><path d="M12.500 0.500 c1.500 3.500 5 5 8 8.500 c3 3.500 4.500 6.500 4.500 10 c0 4 -3 7 -12 7 c-9 0 -12.500 -3 -12.500 -7 c0 -4 3 -6.500 6 -9.500 c2.500 -2.500 5 -5 6 -9 Z" fill="url(#fr)"/></svg>
<div class="t c" style="left:1972.3px;top:1631.8px;font-size:19.5px;color:#f5515a;">3</div>
<div class="t " style="left:2022.0px;top:1632.7px;font-size:17.6px;color:#30343b;">深蓝汽车</div>
<div class="t c" style="left:2151.0px;top:1632.3px;font-size:18.4px;color:#30343b;">232</div>
<div class="t c" style="left:2225.7px;top:1632.4px;font-size:18.2px;color:#30343b;">16.81%</div>
<div class="a" style="left:1960.3px;top:1721.5px;width:302.8px;height:1.3px;background:#e6e9ef;"></div>
<svg class="a" style="left:1959.3px;top:1681.6px" width="26" height="26" viewBox="0 0 26 26"><path d="M12.500 0.500 c1.500 3.500 5 5 8 8.500 c3 3.500 4.500 6.500 4.500 10 c0 4 -3 7 -12 7 c-9 0 -12.500 -3 -12.500 -7 c0 -4 3 -6.500 6 -9.500 c2.500 -2.500 5 -5 6 -9 Z" fill="url(#fb)"/></svg>
<div class="t c b" style="left:1972.3px;top:1686.3px;font-size:19.5px;color:#4a5a78;">4</div>
<div class="t " style="left:2022.0px;top:1687.3px;font-size:17.6px;color:#30343b;">领克</div>
<div class="t c" style="left:2151.0px;top:1686.9px;font-size:18.4px;color:#30343b;">130</div>
<div class="t c" style="left:2225.7px;top:1687.0px;font-size:18.2px;color:#30343b;">10.00%</div>
<div class="a" style="left:1960.3px;top:1722.9px;width:302.8px;height:53.9px;background:#e4f7fe;"></div>
<div class="t c" style="left:1972.3px;top:1741.2px;font-size:19px;color:#3d424c;">-</div>
<div class="t " style="left:2022.0px;top:1741.9px;font-size:17.6px;color:#30343b;">市场均值</div>
<div class="t c" style="left:2151.0px;top:1741.5px;font-size:18.4px;color:#30343b;">136.94</div>
<div class="t c" style="left:2225.7px;top:1741.6px;font-size:18.2px;color:#30343b;">8.80%</div>
</div></div>
<div class="a" style="left:846px;top:1825.5px;width:1367.5px;height:10px;border:2.6px solid #8ec5f5;border-right:none;border-radius:12px 0 0 0;background:#f4faff"></div>
<div class="a" style="left:860.4px;top:1671px;width:318.4px;height:55.3px;border:4.3px solid #f6525c;border-radius:2px"></div>
</body></html>
